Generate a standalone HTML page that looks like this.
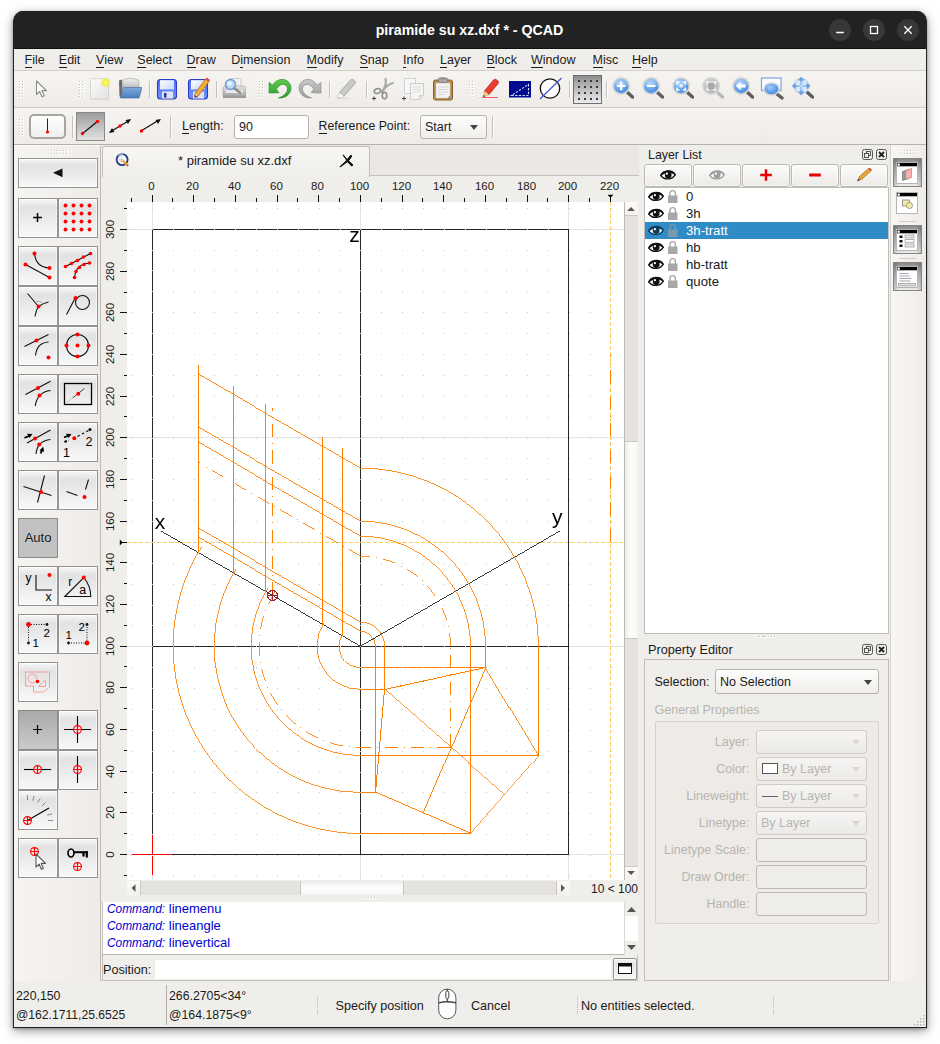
<!DOCTYPE html>
<html lang="en"><head><meta charset="utf-8"><title>piramide su xz.dxf * - QCAD</title>
<style>
*{box-sizing:border-box}
html,body{margin:0;padding:0}
body{width:940px;height:1044px;background:#fff;overflow:hidden;position:relative;font-family:"Liberation Sans",sans-serif;font-size:12.5px;color:#1a1a1a}
.a{position:absolute}
.t{position:absolute;white-space:pre;line-height:16px;height:16px}
#win{left:13px;top:11px;width:914px;height:1017px;background:linear-gradient(#222 0,#222 30px,#f0eeea 30px);border-radius:10px 10px 0 0;border:1px solid #222;border-top:0;box-shadow:0 3px 11px 0 rgba(0,0,0,.40),0 1px 3px rgba(0,0,0,.28);overflow:hidden}
#title{left:0;top:0;width:912px;height:38px;background:#222222;border-bottom:1px solid #101010}
#title .tt{left:-1px;width:913px;top:10px;text-align:center;color:#fff;font-weight:bold;font-size:14.2px;line-height:18px;height:18px}
.wb{position:absolute;top:8px;width:22px;height:22px;border-radius:11px;background:#383838}
#menubar{left:0;top:38px;width:912px;height:22px;background:#f0eeea;border-bottom:1px solid #d2cfca}
.mi u{text-decoration:none;border-bottom:1px solid #1a1a1a;padding-bottom:0px}
.tb{left:0;width:912px;background:linear-gradient(#f6f4f1,#efece8);border-bottom:1px solid #cfccc7}
.grip{position:absolute;background-image:linear-gradient(#bdbab5,#bdbab5),linear-gradient(#fff,#fff);background-size:1px 1px,1px 1px;background-position:0 0,1px 1px;background-repeat:no-repeat}
.gd{position:absolute;width:2px;height:2px;background:linear-gradient(135deg,#bebbb6 50%,#fff 50%)}
.vsep{position:absolute;width:2px;background:linear-gradient(90deg,#c3c0bb 50%,#fdfdfc 50%)}
.btn{position:absolute;border:1px solid #949494;background:linear-gradient(#f8f8f8 0%,#e2e2e2 22%,#ebebeb 55%,#f8f8f8 100%);box-shadow:inset 0 0 0 1px rgba(255,255,255,.55)}
.btn.on{background:#bdbdbd;border-color:#8a8a8a;box-shadow:none}
.btn svg{position:absolute;left:0;top:0}
.dis{color:#b7b4b0}
.combo{position:absolute;border:1px solid #b6b3ae;border-radius:3px;background:linear-gradient(#fdfdfd,#f0eeeb)}
.field{position:absolute;border:1px solid #c9c6c1;border-radius:3px;background:#f1efeb}
svg{display:block}
svg .o{stroke:#ff8000;stroke-width:1;fill:none}
svg .od{stroke:#ff8000;stroke-width:1;fill:none;stroke-dasharray:13.2 6.1 1 6.1}
svg .k{stroke:#262626;stroke-width:1;fill:none}
svg .mg{stroke:#e4e4e4;stroke-width:1}
svg .cur{stroke:#ffcf5e;stroke-width:1;stroke-dasharray:4 2}
svg .lbl{font-family:"Liberation Sans",sans-serif;font-size:21px;fill:#000}
</style></head>
<body>
<div id="win" class="a">
<svg width="0" height="0" style="position:absolute"><defs>
<radialGradient id="gy"><stop offset="0" stop-color="#ffffb0"/><stop offset=".45" stop-color="#f6ee30"/><stop offset="1" stop-color="#f0e840" stop-opacity="0"/></radialGradient>
<linearGradient id="gsheet" x1="0" y1="0" x2="1" y2="1"><stop offset="0" stop-color="#fbfbfb"/><stop offset="1" stop-color="#e2e2e2"/></linearGradient>
<linearGradient id="gfold" x1="0" y1="0" x2="0" y2="1"><stop offset="0" stop-color="#7fa9dc"/><stop offset="1" stop-color="#4d7dbd"/></linearGradient>
<linearGradient id="gpap" x1="0" y1="0" x2="0" y2="1"><stop offset="0" stop-color="#f2f2f2"/><stop offset="1" stop-color="#b5b5b5"/></linearGradient>
<linearGradient id="gsave" x1="0" y1="0" x2="0" y2="1"><stop offset="0" stop-color="#5070f0"/><stop offset="1" stop-color="#6f92ff"/></linearGradient>
<linearGradient id="glab" x1="0" y1="0" x2="1" y2="1"><stop offset="0" stop-color="#ffffff"/><stop offset="1" stop-color="#c4d6ff"/></linearGradient>
<linearGradient id="ggray" x1="0" y1="0" x2="0" y2="1"><stop offset="0" stop-color="#e6e6e6"/><stop offset="1" stop-color="#a9a9a9"/></linearGradient>
<radialGradient id="glens" cx=".4" cy=".35" r=".7"><stop offset="0" stop-color="#a6ccf8"/><stop offset=".7" stop-color="#5b9bea"/><stop offset="1" stop-color="#4a8ae0"/></radialGradient>
<radialGradient id="glensd" cx=".4" cy=".35" r=".7"><stop offset="0" stop-color="#dcdcdc"/><stop offset="1" stop-color="#b0b0b0"/></radialGradient>
<linearGradient id="gundo" x1="0" y1="0" x2="0" y2="1"><stop offset="0" stop-color="#5ccc4c"/><stop offset="1" stop-color="#2f9a2f"/></linearGradient>
<linearGradient id="gredo" x1="0" y1="0" x2="0" y2="1"><stop offset="0" stop-color="#c9c9c9"/><stop offset="1" stop-color="#9c9c9c"/></linearGradient>
</defs></svg>
<div id="title" class="a"><div class="t tt">piramide su xz.dxf * - QCAD</div>
<div class="wb" style="left:815px"><svg width="22" height="22" viewBox="0 0 22 22"><path d="M7.200 13.500h7.600" stroke="#fff" stroke-width="1.300"/></svg></div>
<div class="wb" style="left:849px"><svg width="22" height="22" viewBox="0 0 22 22"><rect x="7.500" y="7.500" width="7" height="7" fill="none" stroke="#fff" stroke-width="1.300"/></svg></div>
<div class="wb" style="left:883px"><svg width="22" height="22" viewBox="0 0 22 22"><path d="M7.300 7.300l7.400 7.400M14.700 7.300l-7.400 7.400" stroke="#fff" stroke-width="1.300"/></svg></div>
</div>
<div id="menubar" class="a">
<div class="t mi" style="left:10.5px;top:3px;width:18.4px"><u>F</u>ile</div>
<div class="t mi" style="left:44.8px;top:3px;width:21px"><u>E</u>dit</div>
<div class="t mi" style="left:82.1px;top:3px;width:26px"><u>V</u>iew</div>
<div class="t mi" style="left:123.30000000000001px;top:3px;width:33.6px"><u>S</u>elect</div>
<div class="t mi" style="left:172.5px;top:3px;width:29.7px"><u>D</u>raw</div>
<div class="t mi" style="left:217.3px;top:3px;width:60.1px">D<u>i</u>mension</div>
<div class="t mi" style="left:292.6px;top:3px;width:37.9px"><u>M</u>odify</div>
<div class="t mi" style="left:345.5px;top:3px;width:28.5px"><u>S</u>nap</div>
<div class="t mi" style="left:389px;top:3px;width:22.5px"><u>I</u>nfo</div>
<div class="t mi" style="left:426px;top:3px;width:31px"><u>L</u>ayer</div>
<div class="t mi" style="left:472.5px;top:3px;width:30px"><u>B</u>lock</div>
<div class="t mi" style="left:517px;top:3px;width:46px"><u>W</u>indow</div>
<div class="t mi" style="left:578.5px;top:3px;width:26px"><u>M</u>isc</div>
<div class="t mi" style="left:618px;top:3px;width:26.5px"><u>H</u>elp</div>
</div>
<div class="a tb" style="top:60px;height:37px">
<div class="gd" style="left:5px;top:10px"></div><div class="gd" style="left:5px;top:13px"></div><div class="gd" style="left:5px;top:16px"></div><div class="gd" style="left:5px;top:19px"></div><div class="gd" style="left:5px;top:22px"></div><div class="gd" style="left:5px;top:25px"></div><div class="gd" style="left:8px;top:10px"></div><div class="gd" style="left:8px;top:13px"></div><div class="gd" style="left:8px;top:16px"></div><div class="gd" style="left:8px;top:19px"></div><div class="gd" style="left:8px;top:22px"></div><div class="gd" style="left:8px;top:25px"></div>
<div class="gd" style="left:65px;top:10px"></div><div class="gd" style="left:65px;top:13px"></div><div class="gd" style="left:65px;top:16px"></div><div class="gd" style="left:65px;top:19px"></div><div class="gd" style="left:65px;top:22px"></div><div class="gd" style="left:65px;top:25px"></div><div class="gd" style="left:68px;top:10px"></div><div class="gd" style="left:68px;top:13px"></div><div class="gd" style="left:68px;top:16px"></div><div class="gd" style="left:68px;top:19px"></div><div class="gd" style="left:68px;top:22px"></div><div class="gd" style="left:68px;top:25px"></div>
<div class="gd" style="left:245px;top:10px"></div><div class="gd" style="left:245px;top:13px"></div><div class="gd" style="left:245px;top:16px"></div><div class="gd" style="left:245px;top:19px"></div><div class="gd" style="left:245px;top:22px"></div><div class="gd" style="left:245px;top:25px"></div><div class="gd" style="left:248px;top:10px"></div><div class="gd" style="left:248px;top:13px"></div><div class="gd" style="left:248px;top:16px"></div><div class="gd" style="left:248px;top:19px"></div><div class="gd" style="left:248px;top:22px"></div><div class="gd" style="left:248px;top:25px"></div>
<div class="gd" style="left:455px;top:10px"></div><div class="gd" style="left:455px;top:13px"></div><div class="gd" style="left:455px;top:16px"></div><div class="gd" style="left:455px;top:19px"></div><div class="gd" style="left:455px;top:22px"></div><div class="gd" style="left:455px;top:25px"></div><div class="gd" style="left:458px;top:10px"></div><div class="gd" style="left:458px;top:13px"></div><div class="gd" style="left:458px;top:16px"></div><div class="gd" style="left:458px;top:19px"></div><div class="gd" style="left:458px;top:22px"></div><div class="gd" style="left:458px;top:25px"></div>
<div class="vsep" style="left:135px;top:10px;height:17px"></div>
<div class="vsep" style="left:202px;top:10px;height:17px"></div>
<div class="vsep" style="left:315px;top:10px;height:17px"></div>
<div class="vsep" style="left:352px;top:10px;height:17px"></div>
<div class="vsep" style="left:555px;top:10px;height:17px"></div>
<div class="vsep" style="left:592px;top:10px;height:17px"></div>
<svg class="a" style="left:15.0px;top:6.0px" width="24" height="24" viewBox="0 0 24 24"><path d="M7.500 4v13.500l3.200-3 2.300 5.300 2.200-1-2.300-5.200h4.500z" fill="#fff" stroke="#8a8a8a" stroke-width="1.100" stroke-linejoin="round"/></svg>
<svg class="a" style="left:74.0px;top:6.0px" width="24" height="24" viewBox="0 0 24 24"><rect x="2.500" y="2" width="18.500" height="21" rx="1" fill="#d5d5d5" opacity=".6"/><rect x="2.500" y="1.700" width="18" height="20.300" rx="1" fill="url(#gsheet)" stroke="#cfcfcf" stroke-width=".8"/><circle cx="17.600" cy="5.500" r="5.500" fill="url(#gy)"/></svg>
<svg class="a" style="left:104.0px;top:6.0px" width="24" height="24" viewBox="0 0 24 24"><path d="M1 3.500l3-1v18l-2.500-1z" fill="#6a6a6a"/><path d="M5 3c3-2 10-2 14-.5l2 1.500v8H4z" fill="url(#gpap)" stroke="#a0a0a0" stroke-width=".6"/><path d="M5.500 10.500h18.500l-3 10.500H2.500z" fill="url(#gfold)" stroke="#4672ad" stroke-width=".7"/></svg>
<svg class="a" style="left:141.0px;top:6.0px" width="24" height="24" viewBox="0 0 24 24"><rect x="2.500" y="2.500" width="19" height="19.500" rx="3" fill="url(#gsave)" stroke="#2c3cc4" stroke-width="1.100"/><rect x="5" y="3.200" width="14" height="9.300" fill="url(#glab)"/><rect x="7" y="14.500" width="11" height="7" fill="#dfe3ef"/><rect x="9" y="16" width="2.500" height="4.500" fill="#2336b0"/></svg>
<svg class="a" style="left:172.0px;top:6.0px" width="24" height="24" viewBox="0 0 24 24"><rect x="2.500" y="2.500" width="19" height="19.500" rx="3" fill="url(#gsave)" stroke="#2c3cc4" stroke-width="1.100"/><rect x="5" y="3.200" width="14" height="9.300" fill="url(#glab)"/><rect x="7" y="14.500" width="11" height="7" fill="#dfe3ef"/><rect x="9" y="16" width="2.500" height="4.500" fill="#2336b0"/><path d="M9.500 15.500l10-13.500 3.500 2.600-10 13.500-4.600 1.900z" fill="#f2a93a" stroke="#a86814" stroke-width=".7"/><path d="M19.500 2l3.500 2.600 1-1.500-3.400-2.500z" fill="#e4453a"/><path d="M9.500 15.500l-1.100 4.500 4.600-1.900z" fill="#f0d8b0" stroke="#a86814" stroke-width=".5"/><path d="M8.400 20l.5-2 1.500 1.200z" fill="#333"/></svg>
<svg class="a" style="left:208.0px;top:6.0px" width="24" height="24" viewBox="0 0 24 24"><path d="M8 1.500h11v9H8z" fill="#f1f1f1" stroke="#c4c4c4" stroke-width=".8"/><path d="M1 12c0-2 1-3 3-3h17c2 0 3 1 3 3v6.500H1z" fill="url(#ggray)" stroke="#9a9a9a" stroke-width=".6"/><path d="M1 18.500h23v2.500H1z" fill="#9b9b9b"/><rect x="4" y="13" width="17" height="3" rx="1" fill="#f4f4f4" opacity=".8"/><circle cx="8.500" cy="7.500" r="5" fill="#bcd6f4" stroke="#6f9fd8" stroke-width="1.600"/><circle cx="7.500" cy="6.500" r="2.400" fill="#e6f0fc"/><path d="M12.500 11.500l5.500 4" stroke="#8a8a8a" stroke-width="2.600" stroke-linecap="round"/></svg>
<svg class="a" style="left:254.0px;top:6.0px" width="24" height="24" viewBox="0 0 24 24"><path d="M1.100 5.500V16l9.900-.3-2.700-3.300C10 8.500 14 6.500 17 7.800c3.300 1.700 3.300 6 .3 9-2 2-4.300 3.500-6.700 4.100 4.400.6 9.400-1.400 11.700-6.400C24.500 9 21 3.500 15.500 2.500 11 1.800 7 4.500 4.600 8.200z" fill="url(#gundo)" stroke="#2a8a2a" stroke-width=".7" stroke-linejoin="round"/></svg>
<svg class="a" style="left:284.0px;top:6.0px" width="24" height="24" viewBox="0 0 24 24"><g transform="translate(24 0) scale(-1 1)"><path d="M1.100 5.500V16l9.900-.3-2.700-3.300C10 8.500 14 6.500 17 7.800c3.300 1.700 3.300 6 .3 9-2 2-4.300 3.500-6.700 4.100 4.400.6 9.400-1.400 11.700-6.400C24.500 9 21 3.500 15.500 2.500 11 1.800 7 4.500 4.600 8.200z" fill="url(#gredo)" stroke="#8c8c8c" stroke-width=".7" stroke-linejoin="round"/></g></svg>
<svg class="a" style="left:321.0px;top:6.0px" width="24" height="24" viewBox="0 0 24 24"><path d="M4.500 15.500l11-12.500c.8-.9 2-1 2.900-.2l1.300 1.100c.9.800 1 2 .2 2.900l-11 12.500z" fill="#c9c9c9" stroke="#9d9d9d" stroke-width=".8"/><path d="M4.500 15.500l4.400 3.800-1.400 1.500-5-.3z" fill="#fafafa" stroke="#bdbdbd" stroke-width=".7"/><path d="M2 21.500h13" stroke="#d9d9d9" stroke-width="1"/></svg>
<svg class="a" style="left:357.0px;top:6.0px" width="24" height="24" viewBox="0 0 24 24"><path d="M14.500 2c1 4 0 8-3 12M22 6c-4 1-8 4-11 9" stroke="#a8a8a8" stroke-width="2.200" fill="none" stroke-linecap="round"/><ellipse cx="13.500" cy="18.500" rx="2.300" ry="3.300" fill="none" stroke="#8e8e8e" stroke-width="1.600"/><ellipse cx="6.500" cy="14" rx="3.300" ry="2.300" fill="none" stroke="#8e8e8e" stroke-width="1.600" transform="rotate(-20 6.500 14)"/><path d="M1 21.500h4M3 19.500v4" stroke="#444" stroke-width="1"/></svg>
<svg class="a" style="left:387.0px;top:6.0px" width="24" height="24" viewBox="0 0 24 24"><path d="M3.500 1.500h11v15h-11z" fill="#f7f7f7" stroke="#cdcdcd" stroke-width=".9"/><path d="M9.500 6.500h13v12l-4 4h-9z" fill="#f4f4f4" stroke="#c6c6c6" stroke-width=".9"/><path d="M18.500 22.500v-4h4" fill="#e2e2e2" stroke="#c6c6c6" stroke-width=".7"/><path d="M12 10h8M12 12.500h8M12 15h8" stroke="#dcdcdc" stroke-width="1"/><path d="M1 21.500h4M3 19.500v4" stroke="#444" stroke-width="1"/></svg>
<svg class="a" style="left:417.0px;top:6.0px" width="24" height="24" viewBox="0 0 24 24"><rect x="2.500" y="3" width="19" height="20" rx="2" fill="#b98a4a" stroke="#8a6020" stroke-width="1"/><path d="M5 6h14v15l-2 0H5z" fill="#f3f3f3" stroke="#cfcfcf" stroke-width=".6"/><path d="M7 10h10M7 12.500h10M7 15h10M7 17.500h7" stroke="#d6d6d6" stroke-width="1"/><path d="M16 21.500l3.500-3.500v3.500z" fill="#8f8f8f"/><rect x="7.500" y="1" width="9" height="4.500" rx="1.200" fill="#a9a9a9" stroke="#7a7a7a" stroke-width=".8"/><rect x="9.500" y=".5" width="5" height="2" rx="1" fill="#8a8a8a"/></svg>
<svg class="a" style="left:464.0px;top:6.0px" width="24" height="24" viewBox="0 0 24 24"><path d="M6.500 14l9-11c.7-.9 1.900-1 2.800-.3l1.400 1.100c.9.700 1 1.900.3 2.800l-9 11z" fill="#ee3b30" stroke="#b8201a" stroke-width=".8"/><path d="M6.500 14l4.500 3.600-5.700 2.400z" fill="#f3cf9c" stroke="#b98a4a" stroke-width=".5"/><path d="M5.300 20l.5-2 1.500 1.200z" fill="#333"/><path d="M4 20.500h16" stroke="#f06060" stroke-width="1.200"/></svg>
<svg class="a" style="left:494.0px;top:6.0px" width="24" height="24" viewBox="0 0 24 24"><rect x="1" y="4" width="22" height="16.500" fill="#000a8c"/><path d="M3.500 18.500h17V7.500z" fill="none" stroke="#e0e8ff" stroke-width="1.100" stroke-dasharray="2.200 1.500"/></svg>
<svg class="a" style="left:524.0px;top:6.0px" width="24" height="24" viewBox="0 0 24 24"><circle cx="12" cy="11.500" r="9.700" fill="#fff" stroke="#111" stroke-width="1.300"/><path d="M2 22L23.500 1" stroke="#3a4fe0" stroke-width="1.100"/></svg>
<div class="btn on" style="left:559px;top:4px;width:29px;height:29px;background:linear-gradient(#8d8d8d,#a9a9a9 25%,#ebebeb);border-color:#6e6e6e"><svg width="27" height="27" viewBox="0 0 27 27"><g fill="#3a3a3a"><rect x="4" y="4" width="2" height="2"/><rect x="4" y="10" width="2" height="2"/><rect x="4" y="16" width="2" height="2"/><rect x="4" y="22" width="2" height="2"/><rect x="10" y="4" width="2" height="2"/><rect x="10" y="10" width="2" height="2"/><rect x="10" y="16" width="2" height="2"/><rect x="10" y="22" width="2" height="2"/><rect x="16" y="4" width="2" height="2"/><rect x="16" y="10" width="2" height="2"/><rect x="16" y="16" width="2" height="2"/><rect x="16" y="22" width="2" height="2"/><rect x="22" y="4" width="2" height="2"/><rect x="22" y="10" width="2" height="2"/><rect x="22" y="16" width="2" height="2"/><rect x="22" y="22" width="2" height="2"/></g></svg></div>
<svg class="a" style="left:596.0px;top:6.0px" width="24" height="24" viewBox="0 0 24 24"><path d="M17.500 15.500l5 4.500" stroke="#5e5e5e" stroke-width="3.400" stroke-linecap="round"/><circle cx="11.200" cy="9" r="8.900" fill="#d3d6d3"/><circle cx="11.200" cy="9" r="7.200" fill="url(#glens)"/><path d="M4.500 8.500a6.700 6.700 0 0 1 13.400 0c-4 1.500-9.400 1.500-13.400 0z" fill="#fff" opacity=".22"/><path d="M7 9h8.400M11.200 4.800v8.400" stroke="#fff" stroke-width="2.200" fill="none"/></svg>
<svg class="a" style="left:626.0px;top:6.0px" width="24" height="24" viewBox="0 0 24 24"><path d="M17.500 15.500l5 4.500" stroke="#5e5e5e" stroke-width="3.400" stroke-linecap="round"/><circle cx="11.200" cy="9" r="8.900" fill="#d3d6d3"/><circle cx="11.200" cy="9" r="7.200" fill="url(#glens)"/><path d="M4.500 8.500a6.700 6.700 0 0 1 13.400 0c-4 1.500-9.400 1.500-13.400 0z" fill="#fff" opacity=".22"/><path d="M7 9h8.400" stroke="#fff" stroke-width="2.200" fill="none"/></svg>
<svg class="a" style="left:656.0px;top:6.0px" width="24" height="24" viewBox="0 0 24 24"><path d="M17.500 15.500l5 4.500" stroke="#5e5e5e" stroke-width="3.400" stroke-linecap="round"/><circle cx="11.200" cy="9" r="8.900" fill="#d3d6d3"/><circle cx="11.200" cy="9" r="7.200" fill="url(#glens)"/><path d="M4.500 8.500a6.700 6.700 0 0 1 13.400 0c-4 1.500-9.400 1.500-13.400 0z" fill="#fff" opacity=".22"/><path d="M7 7.500V5h2.500M12.900 5h2.500v2.500M15.400 10.500V13h-2.500M9.500 13H7v-2.500" stroke="#fff" stroke-width="1.600" fill="none"/><rect x="9.700" y="7.500" width="3" height="3" fill="#fff" opacity=".8"/></svg>
<svg class="a" style="left:686.0px;top:6.0px" width="24" height="24" viewBox="0 0 24 24"><path d="M17.500 15.500l5 4.500" stroke="#b9b9b9" stroke-width="3.400" stroke-linecap="round"/><circle cx="11.200" cy="9" r="8.900" fill="#d4d4d2"/><circle cx="11.200" cy="9" r="7.200" fill="url(#glensd)"/><path d="M7 7.500V5h2.500M12.900 5h2.500v2.500M15.400 10.500V13h-2.500M9.500 13H7v-2.500" stroke="#f2f2f2" stroke-width="1.600" fill="none"/><rect x="8.200" y="6" width="6" height="6" fill="#a9a9a9"/></svg>
<svg class="a" style="left:716.0px;top:6.0px" width="24" height="24" viewBox="0 0 24 24"><path d="M17.500 15.500l5 4.500" stroke="#5e5e5e" stroke-width="3.400" stroke-linecap="round"/><circle cx="11.200" cy="9" r="8.900" fill="#d3d6d3"/><circle cx="11.200" cy="9" r="7.200" fill="url(#glens)"/><path d="M4.500 8.500a6.700 6.700 0 0 1 13.400 0c-4 1.500-9.400 1.500-13.400 0z" fill="#fff" opacity=".22"/><path d="M5.800 9l5-4.200v2.600h4.800v3.200h-4.800v2.600z" fill="#fff"/></svg>
<svg class="a" style="left:746.0px;top:6.0px" width="24" height="24" viewBox="0 0 24 24"><rect x="1.500" y="1" width="19.500" height="12.500" fill="#fbfcfe" stroke="#7ea5e0" stroke-width="1.200"/><path d="M17 17l5 4" stroke="#5e5e5e" stroke-width="3.400" stroke-linecap="round"/><ellipse cx="11.500" cy="12" rx="8.300" ry="6.800" fill="#d3d6d3"/><ellipse cx="11.500" cy="12" rx="6.800" ry="5.300" fill="url(#glens)"/></svg>
<svg class="a" style="left:776.0px;top:6.0px" width="24" height="24" viewBox="0 0 24 24"><path d="M17.500 15.500l5 4.500" stroke="#5e5e5e" stroke-width="3.400" stroke-linecap="round"/><circle cx="11.200" cy="9" r="7.600" fill="#d9e6f6" stroke="#c3d3e8" stroke-width="1.200"/><path d="M11.200 -.5l3.300 4h-6.600zM11.200 18.500l3.300-4h-6.600zM1.700 9l4-3.300v6.600zM20.700 9l-4-3.300v6.600z" fill="#6aa0e6"/><path d="M11.200 3v12M5.200 9h12" stroke="#6aa0e6" stroke-width="2.200"/><path d="M11.200 4.500v9M6.700 9h9" stroke="#fff" stroke-width=".8"/></svg>
</div>
<div class="a tb" style="top:97px;height:37px;border-bottom:1px solid #b4b1ac">
<div class="gd" style="left:5px;top:11px"></div><div class="gd" style="left:5px;top:14px"></div><div class="gd" style="left:5px;top:17px"></div><div class="gd" style="left:5px;top:20px"></div><div class="gd" style="left:5px;top:23px"></div><div class="gd" style="left:5px;top:26px"></div><div class="gd" style="left:8px;top:11px"></div><div class="gd" style="left:8px;top:14px"></div><div class="gd" style="left:8px;top:17px"></div><div class="gd" style="left:8px;top:20px"></div><div class="gd" style="left:8px;top:23px"></div><div class="gd" style="left:8px;top:26px"></div>
<div class="a" style="left:15px;top:6px;width:37px;height:25px;border:2px solid #a7a5a2;border-radius:5px;background:linear-gradient(#fff,#f0efed)"><svg width="33" height="21" viewBox="0 0 33 21"><path d="M16.5 2.500v13" stroke="#222" stroke-width="1"/><circle cx="16.5" cy="16" r="1.6" fill="#f00"/></svg></div>
<div class="vsep" style="left:58px;top:8px;height:22px"></div>
<div class="btn on" style="left:62px;top:4px;width:29px;height:29px;background:linear-gradient(#9d9d9d,#e3e3e3);border-color:#8a8a8a"><svg width="27" height="27" viewBox="0 0 27 27"><path d="M5 21L21 8" stroke="#111" stroke-width="1.2"/><circle cx="5.500" cy="20.5" r="1.700" fill="#f00"/><circle cx="20.5" cy="8.500" r="1.700" fill="#f00"/></svg></div>
<svg class="a" style="left:93px;top:5px" width="27" height="27" viewBox="0 0 27 27"><path d="M3 19L23 7" stroke="#111" stroke-width="1.2"/><path d="M2 20l5.500-1-2.500-4zM24 6l-5.500 1 2.500 4z" fill="#111"/><circle cx="13" cy="13" r="1.700" fill="#f00"/></svg>
<svg class="a" style="left:123px;top:5px" width="27" height="27" viewBox="0 0 27 27"><path d="M4 18L22 7" stroke="#111" stroke-width="1.200"/><path d="M24 6l-5.500 1 2.500 4z" fill="#111"/><circle cx="4.500" cy="18" r="1.700" fill="#f00"/></svg>
<div class="vsep" style="left:156px;top:8px;height:22px"></div>
<div class="t mi" style="left:168px;top:10px;font-size:12.5px"><u>L</u>ength:</div>
<div class="a" style="left:220px;top:7px;width:75px;height:24px;border:1px solid #b3b0ab;border-radius:3px;background:#fff"><div class="t" style="left:4px;top:3px">90</div></div>
<div class="t mi" style="left:304.5px;top:10px;font-size:12.3px"><u>R</u>eference Point:</div>
<div class="combo" style="left:406px;top:7px;width:67px;height:24px"><div class="t" style="left:4px;top:3px">Start</div><svg class="a" style="left:49px;top:9px" width="9" height="6"><path d="M0 0h8l-4 5z" fill="#444"/></svg></div>
<div class="vsep" style="left:478px;top:8px;height:22px"></div>
</div>
<div class="a" style="left:0;top:134px;width:87px;height:836px;border-right:1px solid #bfbcb7;border-top:1px solid #fbfaf9;background:linear-gradient(90deg,#f6f4f1,#efece8)">
<div class="gd" style="left:37px;top:4px"></div><div class="gd" style="left:37px;top:7px"></div><div class="gd" style="left:40px;top:4px"></div><div class="gd" style="left:40px;top:7px"></div><div class="gd" style="left:43px;top:4px"></div><div class="gd" style="left:43px;top:7px"></div><div class="gd" style="left:46px;top:4px"></div><div class="gd" style="left:46px;top:7px"></div><div class="gd" style="left:49px;top:4px"></div><div class="gd" style="left:49px;top:7px"></div><div class="gd" style="left:52px;top:4px"></div><div class="gd" style="left:52px;top:7px"></div>
<div class="btn" style="left:4px;top:12px;width:80px;height:30px"><svg width="78" height="28" viewBox="0 0 78 28"><path d="M43.500 9.500v8.700l-9.500-4.350z" fill="#111"/></svg></div>
<div class="btn" style="left:4px;top:52px;width:40px;height:40px"><svg width="38" height="38" viewBox="0.5 0.5 38 38"><path d="M14.600 19h8.800M19 14.600v8.800" stroke="#000" stroke-width="1.500"/></svg></div>
<div class="btn" style="left:44px;top:52px;width:40px;height:40px"><svg width="38" height="38" viewBox="0.5 0.5 38 38"><circle cx="7" cy="7" r="1.9" fill="#f00"/><circle cx="7" cy="15" r="1.9" fill="#f00"/><circle cx="7" cy="23" r="1.9" fill="#f00"/><circle cx="7" cy="31" r="1.9" fill="#f00"/><circle cx="15" cy="7" r="1.9" fill="#f00"/><circle cx="15" cy="15" r="1.9" fill="#f00"/><circle cx="15" cy="23" r="1.9" fill="#f00"/><circle cx="15" cy="31" r="1.9" fill="#f00"/><circle cx="23" cy="7" r="1.9" fill="#f00"/><circle cx="23" cy="15" r="1.9" fill="#f00"/><circle cx="23" cy="23" r="1.9" fill="#f00"/><circle cx="23" cy="31" r="1.9" fill="#f00"/><circle cx="31" cy="7" r="1.9" fill="#f00"/><circle cx="31" cy="15" r="1.9" fill="#f00"/><circle cx="31" cy="23" r="1.9" fill="#f00"/><circle cx="31" cy="31" r="1.9" fill="#f00"/></svg></div>
<div class="btn" style="left:4px;top:100px;width:40px;height:40px"><svg width="38" height="38" viewBox="0.5 0.5 38 38"><path d="M7 18l24 13M16 7c1 10 6 14 15 14.500" stroke="#111" stroke-width="1.100" fill="none"/><circle cx="7" cy="18" r="2" fill="#f00"/><circle cx="31" cy="31" r="2" fill="#f00"/><circle cx="16" cy="7" r="2" fill="#f00"/><circle cx="31" cy="21.5" r="2" fill="#f00"/></svg></div>
<div class="btn" style="left:44px;top:100px;width:40px;height:40px"><svg width="38" height="38" viewBox="0.5 0.5 38 38"><path d="M7 20l25-13M16 31c1-9 6-14 15-14.500" stroke="#111" stroke-width="1.100" fill="none"/><circle cx="7" cy="20" r="1.8" fill="#f00"/><circle cx="13" cy="17" r="1.8" fill="#f00"/><circle cx="19" cy="14" r="1.8" fill="#f00"/><circle cx="25" cy="10.5" r="1.8" fill="#f00"/><circle cx="32" cy="7" r="1.8" fill="#f00"/><circle cx="16" cy="31" r="1.8" fill="#f00"/><circle cx="17.5" cy="25" r="1.8" fill="#f00"/><circle cx="21" cy="21" r="1.8" fill="#f00"/><circle cx="25.5" cy="18" r="1.8" fill="#f00"/><circle cx="31" cy="16.5" r="1.8" fill="#f00"/></svg></div>
<div class="btn" style="left:4px;top:140px;width:40px;height:40px"><svg width="38" height="38" viewBox="0.5 0.5 38 38"><path d="M9 7l11 13M20 20c4-3 6-3.500 10-4.500M20 20c-2 3-3 6-3.500 10" stroke="#111" stroke-width="1.100" fill="none"/><path d="M17 16a4.500 4.500 0 0 1 7 1" stroke="#999" fill="none" stroke-width=".8"/><circle cx="20" cy="20" r="2" fill="#f00"/></svg></div>
<div class="btn" style="left:44px;top:140px;width:40px;height:40px"><svg width="38" height="38" viewBox="0.5 0.5 38 38"><circle cx="24" cy="16" r="7" stroke="#111" stroke-width="1.100" fill="none"/><path d="M17 11l-9 17" stroke="#111" stroke-width="1.100" fill="none"/><circle cx="17" cy="11.5" r="2" fill="#f00"/></svg></div>
<div class="btn" style="left:4px;top:180px;width:40px;height:40px"><svg width="38" height="38" viewBox="0.5 0.5 38 38"><path d="M6 20l24-12M17 29c1-9 5-13 13-13.500" stroke="#111" stroke-width="1.100" fill="none"/><circle cx="18" cy="14" r="2" fill="#f00"/><circle cx="30" cy="31" r="2" fill="#f00"/></svg></div>
<div class="btn" style="left:44px;top:180px;width:40px;height:40px"><svg width="38" height="38" viewBox="0.5 0.5 38 38"><circle cx="19" cy="19" r="11" stroke="#111" stroke-width="1.100" fill="none"/><circle cx="19" cy="19" r="2" fill="#f00"/><circle cx="8" cy="19" r="2" fill="#f00"/><circle cx="30" cy="19" r="2" fill="#f00"/><circle cx="19" cy="8" r="2" fill="#f00"/><circle cx="19" cy="30" r="2" fill="#f00"/></svg></div>
<div class="btn" style="left:4px;top:228px;width:40px;height:40px"><svg width="38" height="38" viewBox="0.5 0.5 38 38"><path d="M7 20L32 6.700M16.700 31.500c1.500-9.500 6-14.500 15.300-15.500" stroke="#111" stroke-width="1.100" fill="none"/><circle cx="19.5" cy="13.4" r="2" fill="#f00"/><circle cx="21" cy="20.9" r="2" fill="#f00"/></svg></div>
<div class="btn" style="left:44px;top:228px;width:40px;height:40px"><svg width="38" height="38" viewBox="0.5 0.5 38 38"><rect x="6" y="9" width="27" height="21" stroke="#000" stroke-width="1.300" fill="none"/><path d="M8 28l5-4M29 11l3-2.500" stroke="#aaa" stroke-width=".8"/><path d="M14 23.500l12-9.500" stroke="#333" stroke-width=".9"/><circle cx="19.8" cy="19.2" r="2" fill="#f00"/></svg></div>
<div class="btn" style="left:4px;top:276px;width:40px;height:40px"><svg width="38" height="38" viewBox="0.5 0.5 38 38"><path d="M8.500 20.500L32 7.500M17.500 31.500c.8-9 5-13.500 14.500-14.500" stroke="#111" stroke-width="1.100" fill="none"/><path d="M6 15.300l4.500-1.800" stroke="#000" stroke-width="1.800"/><path d="M14 11.500l-5.500-.3 2.500 4.300z" fill="#000"/><path d="M22.300 31l1-3.500" stroke="#000" stroke-width="1.800"/><path d="M24.700 24.300l-3.700 3.700 4.600 1.300z" fill="#000"/><circle cx="16.5" cy="16" r="2" fill="#f00"/><circle cx="20.7" cy="22" r="2" fill="#f00"/></svg></div>
<div class="btn" style="left:44px;top:276px;width:40px;height:40px"><svg width="38" height="38" viewBox="0.5 0.5 38 38"><path d="M6 19.500l4-1.700" stroke="#000" stroke-width="2" stroke-dasharray="2.500 1.500"/><path d="M5.500 15l4.500-2" stroke="#000" stroke-width="1.800"/><path d="M13 11.500l-5.500-.300 2.500 4.300z" fill="#000"/><path d="M19 14l11-6" stroke="#000" stroke-width="1.100" stroke-dasharray="2.500 2.500"/><circle cx="31.500" cy="7" r="1.500" fill="#000"/><text x="27" y="23" font-size="12.500" font-family="Liberation Sans,sans-serif">2</text><text x="4.500" y="34" font-size="12.500" font-family="Liberation Sans,sans-serif">1</text><circle cx="15.8" cy="15.8" r="2" fill="#f00"/></svg></div>
<div class="btn" style="left:4px;top:324px;width:40px;height:40px"><svg width="38" height="38" viewBox="0.5 0.5 38 38"><path d="M5 16l28 9M26 5l-7 27" stroke="#111" stroke-width="1.100" fill="none"/><circle cx="22.5" cy="21.5" r="2" fill="#f00"/></svg></div>
<div class="btn" style="left:44px;top:324px;width:40px;height:40px"><svg width="38" height="38" viewBox="0.5 0.5 38 38"><path d="M8 21l11 4M27 19l3-10" stroke="#111" stroke-width="1.100" fill="none"/><circle cx="26" cy="26.5" r="2" fill="#f00"/></svg></div>
<div class="btn on" style="left:4px;top:372px;width:40px;height:40px;background:#c2c2c2"><div class="t" style="left:0;width:38px;text-align:center;top:11px;font-size:13px">Auto</div></div>
<div class="btn" style="left:4px;top:420px;width:40px;height:40px"><svg width="38" height="38" viewBox="0.5 0.5 38 38"><g transform="translate(1 .5)"><path d="M16.500 8v15h16" stroke="#111" stroke-width="1.100" fill="none"/><text x="6" y="15" font-size="12" font-family="Liberation Sans,sans-serif">y</text><text x="26" y="34" font-size="12" font-family="Liberation Sans,sans-serif">x</text><circle cx="30" cy="8" r="2" fill="#f00"/></g></svg></div>
<div class="btn" style="left:44px;top:420px;width:40px;height:40px"><svg width="38" height="38" viewBox="0.5 0.5 38 38"><g transform="translate(1.300 1)"><path d="M5 29L24 10c4 5 7 12 7 19z" stroke="#111" stroke-width="1.100" fill="none"/><text x="8.500" y="18" font-size="12" font-family="Liberation Sans,sans-serif">r</text><text x="19.500" y="26.500" font-size="12.500" font-family="Liberation Sans,sans-serif">a</text><circle cx="24" cy="10" r="2" fill="#f00"/></g></svg></div>
<div class="btn" style="left:4px;top:468px;width:40px;height:40px"><svg width="38" height="38" viewBox="0.5 0.5 38 38"><path d="M10 10h18M10 10v18" stroke="#111" stroke-width="1" stroke-dasharray="1 1.500"/><circle cx="28.500" cy="10" r="1.400" fill="#111"/><circle cx="10" cy="28.500" r="1.400" fill="#111"/><text x="25" y="22" font-size="11.500" font-family="Liberation Sans,sans-serif">2</text><text x="14" y="32" font-size="11.500" font-family="Liberation Sans,sans-serif">1</text><circle cx="10" cy="10" r="2.4" fill="#f00"/></svg></div>
<div class="btn" style="left:44px;top:468px;width:40px;height:40px"><svg width="38" height="38" viewBox="0.5 0.5 38 38"><path d="M10 28.500h18M28.500 10v18" stroke="#111" stroke-width="1" stroke-dasharray="1 1.500"/><circle cx="28.500" cy="10" r="1.400" fill="#111"/><circle cx="10" cy="28.500" r="1.400" fill="#111"/><text x="20" y="16" font-size="11.500" font-family="Liberation Sans,sans-serif">2</text><text x="7" y="24" font-size="11.500" font-family="Liberation Sans,sans-serif">1</text><circle cx="28.5" cy="28.5" r="2.4" fill="#f00"/></svg></div>
<div class="btn" style="left:4px;top:516px;width:40px;height:40px"><svg width="38" height="38" viewBox="0.5 0.5 38 38"><path d="M7 9.500h24v15l-6 5H15v-6H7z" fill="none" stroke="#f4a0a0" stroke-width="1"/><circle cx="14" cy="16" r="4.500" fill="none" stroke="#f4a0a0"/><path d="M20 24h7v-7z" fill="none" stroke="#f4a0a0"/><circle cx="19" cy="19" r="1.8" fill="#f00"/></svg></div>
<div class="btn on" style="left:4px;top:564px;width:40px;height:40px;background:linear-gradient(#a9a9a9,#cbcbcb);border-color:#8a8a8a"><svg width="38" height="38" viewBox="0.5 0.5 38 38"><path d="M14.600 19h8.800M19 14.600v8.800" stroke="#000" stroke-width="1.200"/></svg></div>
<div class="btn" style="left:44px;top:564px;width:40px;height:40px"><svg width="38" height="38" viewBox="0.5 0.5 38 38"><path d="M5.500 19h27M19 5.500v27" stroke="#000" stroke-width="1.100" fill="none"/><circle cx="19" cy="19" r="3.900" fill="none" stroke="#f00" stroke-width="1.100"/><path d="M15.1 19h7.800M19 15.1v7.800" stroke="#f00" stroke-width="1.100"/></svg></div>
<div class="btn" style="left:4px;top:604px;width:40px;height:40px"><svg width="38" height="38" viewBox="0.5 0.5 38 38"><path d="M5.500 19h27" stroke="#000" stroke-width="1.100" fill="none"/><circle cx="19" cy="19" r="3.900" fill="none" stroke="#f00" stroke-width="1.100"/><path d="M15.1 19h7.800M19 15.1v7.800" stroke="#f00" stroke-width="1.100"/></svg></div>
<div class="btn" style="left:44px;top:604px;width:40px;height:40px"><svg width="38" height="38" viewBox="0.5 0.5 38 38"><path d="M19 5.500v27" stroke="#000" stroke-width="1.100" fill="none"/><circle cx="19" cy="19" r="3.900" fill="none" stroke="#f00" stroke-width="1.100"/><path d="M15.1 19h7.800M19 15.1v7.800" stroke="#f00" stroke-width="1.100"/></svg></div>
<div class="btn" style="left:4px;top:644px;width:40px;height:40px"><svg width="38" height="38" viewBox="0.5 0.5 38 38"><path d="M9 30l21.500-12.500" stroke="#000" stroke-width="1.100" fill="none"/><path d="M9.0 9.5L9.0 4.5M14.3 10.2L15.6 5.4M19.2 12.2L21.8 7.9M23.5 15.5L27.0 12.0M28.8 24.7L33.6 23.4M29.5 30.0L34.5 30.0" stroke="#8a8a8a" stroke-width="1"/><circle cx="9" cy="30" r="3.900" fill="none" stroke="#f00" stroke-width="1.100"/><path d="M5.1 30h7.800M9 26.1v7.800" stroke="#f00" stroke-width="1.100"/></svg></div>
<div class="btn" style="left:4px;top:692px;width:40px;height:40px"><svg width="38" height="38" viewBox="0.5 0.5 38 38"><circle cx="16" cy="13" r="3.900" fill="none" stroke="#f00" stroke-width="1.100"/><path d="M12.1 13h7.800M16 9.1v7.800" stroke="#f00" stroke-width="1.100"/><path d="M17.500 15.500v13l3.200-2.800 2.200 5 2-.9-2.200-4.900h4.300z" fill="#fff" stroke="#555" stroke-width="1.100" stroke-linejoin="round"/></svg></div>
<div class="btn" style="left:44px;top:692px;width:40px;height:40px"><svg width="38" height="38" viewBox="0.5 0.5 38 38"><ellipse cx="12.500" cy="14.500" rx="3" ry="4" fill="none" stroke="#000" stroke-width="1.700"/><path d="M15.500 13.700h14" stroke="#000" stroke-width="2"/><path d="M25 14v4M28.300 13v6" stroke="#000" stroke-width="2.200"/><circle cx="19" cy="28" r="3.900" fill="none" stroke="#f00" stroke-width="1.100"/><path d="M15.1 28h7.800M19 24.1v7.800" stroke="#f00" stroke-width="1.100"/></svg></div>
</div>
<div class="a" style="left:88px;top:134px;width:537px;height:31px;background:#ebe8e4;border-bottom:1px solid #c4c1bc;border-top:0"></div>
<div class="a" style="left:88px;top:135px;width:268px;height:31px;background:linear-gradient(#f8f6f3,#f0eeea);border:1px solid #c4c1bc;border-bottom:0;border-radius:3px 3px 0 0"></div>
<div class="t" style="left:164px;top:142px;font-size:13px">* piramide su xz.dxf</div>
<svg class="a" style="left:101px;top:141px" width="15" height="15" viewBox="0 0 15 15" ><circle cx="7.100" cy="7.600" r="5.500" fill="#fbfbfb" stroke="#2b4087" stroke-width="1.900"/><path d="M3.500 4.300a5.500 5.500 0 0 1 4.500-2.100" stroke="#8fa3d6" stroke-width="1.700" fill="none"/><path d="M4 7.600h5M6.500 5v5" stroke="#b9b9c4" stroke-width=".7"/><path d="M4.500 9.300h3" stroke="#e9a0a0" stroke-width=".7"/><path d="M7.700 8.500l4.300 4.300" stroke="#f3a81c" stroke-width="2.100"/><path d="M11.800 12.600l1.300 1.300" stroke="#d9606a" stroke-width="2.100"/></svg>
<svg class="a" style="left:324px;top:142px" width="17" height="15" viewBox="0 0 17 15" ><path d="M2.200 13.600Q8 9 12.300 2.300l1.600 1.300Q9.500 10.500 2.400 13.900z" fill="#111"/><path d="M5 2.200l.7-.2Q9 7 14.800 11.500l-1.200 1.900Q8.500 8.500 5 2.200z" fill="#111"/><path d="M2.200 13.700Q8 9.200 13 2.800M5.300 2.200Q9 7.500 14.300 12.400" stroke="#111" stroke-width="1.100" fill="none" stroke-linecap="round"/><path d="M9.300 8L13 3.200M9.800 8.300L14 12" stroke="#111" stroke-width="2.100" fill="none" stroke-linecap="round"/></svg>
<svg class="a" style="left:89px;top:166px" width="536" height="704" viewBox="103 177 536 704" ><g font-family="Liberation Sans,sans-serif" font-size="11.500" fill="#1a1a1a"><text x="151.5" y="189.700" text-anchor="middle">0</text><text x="192.5" y="189.700" text-anchor="middle">20</text><text x="234.5" y="189.700" text-anchor="middle">40</text><text x="276.5" y="189.700" text-anchor="middle">60</text><text x="317.5" y="189.700" text-anchor="middle">80</text><text x="359.5" y="189.700" text-anchor="middle">100</text><text x="401.5" y="189.700" text-anchor="middle">120</text><text x="442.5" y="189.700" text-anchor="middle">140</text><text x="484.5" y="189.700" text-anchor="middle">160</text><text x="526.5" y="189.700" text-anchor="middle">180</text><text x="567.5" y="189.700" text-anchor="middle">200</text><text x="609.5" y="189.700" text-anchor="middle">220</text><text transform="translate(114.300 854.5) rotate(-90)" text-anchor="middle">0</text><text transform="translate(114.300 812.5) rotate(-90)" text-anchor="middle">20</text><text transform="translate(114.300 771.5) rotate(-90)" text-anchor="middle">40</text><text transform="translate(114.300 729.5) rotate(-90)" text-anchor="middle">60</text><text transform="translate(114.300 687.5) rotate(-90)" text-anchor="middle">80</text><text transform="translate(114.300 646.5) rotate(-90)" text-anchor="middle">100</text><text transform="translate(114.300 604.5) rotate(-90)" text-anchor="middle">120</text><text transform="translate(114.300 562.5) rotate(-90)" text-anchor="middle">140</text><text transform="translate(114.300 521.5) rotate(-90)" text-anchor="middle">160</text><text transform="translate(114.300 479.5) rotate(-90)" text-anchor="middle">180</text><text transform="translate(114.300 437.5) rotate(-90)" text-anchor="middle">200</text><text transform="translate(114.300 396.5) rotate(-90)" text-anchor="middle">220</text><text transform="translate(114.300 354.5) rotate(-90)" text-anchor="middle">240</text><text transform="translate(114.300 312.5) rotate(-90)" text-anchor="middle">260</text><text transform="translate(114.300 271.5) rotate(-90)" text-anchor="middle">280</text><text transform="translate(114.300 229.5) rotate(-90)" text-anchor="middle">300</text></g><path d="M131.5 198V202M152.5 195V202M172.5 198V202M193.5 195V202M214.5 198V202M235.5 195V202M256.5 198V202M277.5 195V202M297.5 198V202M318.5 195V202M339.5 198V202M360.5 195V202M381.5 198V202M402.5 195V202M422.5 198V202M443.5 195V202M464.5 198V202M485.5 195V202M506.5 198V202M527.5 195V202M547.5 198V202M568.5 195V202M589.5 198V202M610.5 195V202M124 875.5H127M120 854.5H127M124 833.5H127M120 812.5H127M124 792.5H127M120 771.5H127M124 750.5H127M120 729.5H127M124 708.5H127M120 687.5H127M124 666.5H127M120 646.5H127M124 625.5H127M120 604.5H127M124 583.5H127M120 562.5H127M124 542.5H127M120 521.5H127M124 500.5H127M120 479.5H127M124 458.5H127M120 437.5H127M124 416.5H127M120 396.5H127M124 375.5H127M120 354.5H127M124 333.5H127M120 312.5H127M124 292.5H127M120 271.5H127M124 250.5H127M120 229.5H127M124 208.5H127" stroke="#111" stroke-width="1" fill="none"/><path d="M607.500 194.800h6l-3 3z" fill="#000"/><path d="M610.500 195V202" stroke="#000"/><path d="M119.800 539.500v6l3-3z" fill="#000"/><path d="M120 542.500H127" stroke="#000"/></svg>
<svg class="a" style="left:113px;top:191px;background:#fff" width="497" height="678" viewBox="127 202 497 678" shape-rendering="crispEdges"><line class="mg" x1="152.5" y1="202" x2="152.5" y2="880"/>
<line class="mg" x1="360.5" y1="202" x2="360.5" y2="880"/>
<line class="mg" x1="568.5" y1="202" x2="568.5" y2="880"/>
<line class="mg" x1="127" y1="854.5" x2="624" y2="854.5"/>
<line class="mg" x1="127" y1="646.5" x2="624" y2="646.5"/>
<line class="mg" x1="127" y1="437.5" x2="624" y2="437.5"/>
<line class="mg" x1="127" y1="229.5" x2="624" y2="229.5"/>
<line class="cur" x1="127" y1="542.5" x2="624" y2="542.5"/>
<line class="cur" x1="610.5" y1="202" x2="610.5" y2="880"/>
<rect class="k" x="152.5" y="229.5" width="416" height="625" fill="none"/>
<line class="k" x1="152.1" y1="646.5" x2="568.77" y2="646.5"/>
<line class="k" x1="360.5" y1="854.5" x2="360.5" y2="229.5"/>
<line class="k" x1="360.43" y1="646.17" x2="160.89" y2="530.96" style="stroke-width:0.90"/>
<line class="k" x1="360.43" y1="646.17" x2="559.98" y2="530.96" style="stroke-width:0.90"/>
<line class="o" x1="485.5" y1="667.5" x2="538.5" y2="755.5" style="stroke-width:0.89"/>
<line class="o" x1="538.5" y1="755.5" x2="470.5" y2="833.5" style="stroke-width:0.78"/>
<line class="o" x1="470.5" y1="833.5" x2="375.5" y2="792.5" style="stroke-width:0.95"/>
<line class="o" x1="375.5" y1="792.5" x2="384.5" y2="689.5"/>
<line class="o" x1="384.5" y1="689.5" x2="485.5" y2="667.5"/>
<line class="o" x1="485.5" y1="667.5" x2="423" y2="813" style="stroke-width:0.95"/>
<line class="o" x1="384.5" y1="689.5" x2="504.5" y2="794.5" style="stroke-width:0.78"/>
<line class="o" x1="485.5" y1="667.5" x2="360.43" y2="667.5"/>
<path class="o" style="stroke-width:.86" d="M342.34 634.86A21.33 21.33 0 0 0 360.43 667.5"/>
<line class="o" x1="485.5" y1="667.5" x2="485.5" y2="646.17"/>
<path class="o" style="stroke-width:.86" d="M485.5 646.17A125.07 125.07 0 0 0 360.43 521.1"/>
<line class="o" x1="360.43" y1="521.1" x2="198.5" y2="427.61" style="stroke-width:0.90"/>
<line class="o" x1="342.5" y1="635.5" x2="342.5" y2="448"/>
<line class="o" x1="538.5" y1="755.5" x2="360.43" y2="755.5"/>
<path class="o" style="stroke-width:.86" d="M267.71 588.23A109.33 109.33 0 0 0 360.43 755.5"/>
<line class="o" x1="538.5" y1="755.5" x2="538.5" y2="646.17"/>
<path class="o" style="stroke-width:.86" d="M538.5 646.17A178.07 178.07 0 0 0 360.43 468.1"/>
<line class="o" x1="360.43" y1="468.1" x2="198.5" y2="374.61" style="stroke-width:0.90"/>
<line class="o" x1="265.5" y1="591.5" x2="265.5" y2="404"/>
<line class="o" x1="470.5" y1="833.5" x2="360.43" y2="833.5"/>
<path class="o" style="stroke-width:.86" d="M201.57 546.9A187.33 187.33 0 0 0 360.43 833.5"/>
<line class="o" x1="470.5" y1="833.5" x2="470.5" y2="646.17"/>
<path class="o" style="stroke-width:.86" d="M470.5 646.17A110.07 110.07 0 0 0 360.43 536.1"/>
<line class="o" x1="360.43" y1="536.1" x2="198.5" y2="442.61" style="stroke-width:0.90"/>
<line class="o" x1="198.5" y1="552.5" x2="198.5" y2="365"/>
<line class="o" x1="375.5" y1="792.5" x2="360.43" y2="792.5"/>
<path class="o" style="stroke-width:.86" d="M236.34 568.62A146.33 146.33 0 0 0 360.43 792.5"/>
<line class="o" x1="375.5" y1="792.5" x2="375.5" y2="646.17"/>
<path class="o" style="stroke-width:.86" d="M375.5 646.17A15.07 15.07 0 0 0 360.43 631.1"/>
<line class="o" x1="360.43" y1="631.1" x2="198.5" y2="537.61" style="stroke-width:0.90"/>
<line class="o" x1="233.5" y1="573" x2="233.5" y2="385.5"/>
<line class="o" x1="384.5" y1="689.5" x2="360.43" y2="689.5"/>
<path class="o" style="stroke-width:.86" d="M323.68 623.2A43.33 43.33 0 0 0 360.43 689.5"/>
<line class="o" x1="384.5" y1="689.5" x2="384.5" y2="646.17"/>
<path class="o" style="stroke-width:.86" d="M384.5 646.17A24.07 24.07 0 0 0 360.43 622.1"/>
<line class="o" x1="360.43" y1="622.1" x2="198.5" y2="528.61" style="stroke-width:0.90"/>
<line class="o" x1="322.5" y1="624.5" x2="322.5" y2="437"/>
<line class="od" x1="450.5" y1="747.5" x2="360.43" y2="747.5"/>
<path class="od" style="stroke-width:.86" d="M274.5 592.47A101.33 101.33 0 0 0 360.43 747.5"/>
<line class="od" x1="450.5" y1="747.5" x2="450.5" y2="646.17"/>
<path class="od" style="stroke-width:.86" d="M450.5 646.17A90.07 90.07 0 0 0 360.43 556.1"/>
<line class="od" x1="360.43" y1="556.1" x2="198.5" y2="462.61" style="stroke-width:0.90"/>
<line class="od" x1="272.5" y1="595.5" x2="272.5" y2="408"/>
<line class="od" x1="610.5" y1="542" x2="610.5" y2="354.5"/>
<path d="M132.1 854.5H172.1M152.1 834.5V874.5" stroke="#ff0000" stroke-width="1" fill="none"/>
<g stroke="#a32020" stroke-width="1" fill="none"><circle cx="272.5" cy="595.5" r="5"/><path d="M267.5 595.5H277.5M272.5 590.5V600.5"/></g>
<g shape-rendering="auto" style="filter:grayscale(1)"><text x="154.800" y="529" class="lbl">x</text><text x="552" y="524" class="lbl">y</text><text x="349.300" y="242" class="lbl">z</text></g><path d="M131 876.5h1M131 855.5h1M131 834.5h1M131 813.5h1M131 792.5h1M131 772.5h1M131 751.5h1M131 730.5h1M131 709.5h1M131 688.5h1M131 667.5h1M131 646.5h1M131 625.5h1M131 605.5h1M131 584.5h1M131 563.5h1M131 542.5h1M131 521.5h1M131 500.5h1M131 479.5h1M131 458.5h1M131 438.5h1M131 417.5h1M131 396.5h1M131 375.5h1M131 354.5h1M131 333.5h1M131 312.5h1M131 291.5h1M131 270.5h1M131 250.5h1M131 229.5h1M131 208.5h1M152 876.5h1M152 855.5h1M152 834.5h1M152 813.5h1M152 792.5h1M152 772.5h1M152 751.5h1M152 730.5h1M152 709.5h1M152 688.5h1M152 667.5h1M152 646.5h1M152 625.5h1M152 605.5h1M152 584.5h1M152 563.5h1M152 542.5h1M152 521.5h1M152 500.5h1M152 479.5h1M152 458.5h1M152 438.5h1M152 417.5h1M152 396.5h1M152 375.5h1M152 354.5h1M152 333.5h1M152 312.5h1M152 291.5h1M152 270.5h1M152 250.5h1M152 229.5h1M152 208.5h1M173 876.5h1M173 855.5h1M173 834.5h1M173 813.5h1M173 792.5h1M173 772.5h1M173 751.5h1M173 730.5h1M173 709.5h1M173 688.5h1M173 667.5h1M173 646.5h1M173 625.5h1M173 605.5h1M173 584.5h1M173 563.5h1M173 542.5h1M173 521.5h1M173 500.5h1M173 479.5h1M173 458.5h1M173 438.5h1M173 417.5h1M173 396.5h1M173 375.5h1M173 354.5h1M173 333.5h1M173 312.5h1M173 291.5h1M173 270.5h1M173 250.5h1M173 229.5h1M173 208.5h1M194 876.5h1M194 855.5h1M194 834.5h1M194 813.5h1M194 792.5h1M194 772.5h1M194 751.5h1M194 730.5h1M194 709.5h1M194 688.5h1M194 667.5h1M194 646.5h1M194 625.5h1M194 605.5h1M194 584.5h1M194 563.5h1M194 542.5h1M194 521.5h1M194 500.5h1M194 479.5h1M194 458.5h1M194 438.5h1M194 417.5h1M194 396.5h1M194 375.5h1M194 354.5h1M194 333.5h1M194 312.5h1M194 291.5h1M194 270.5h1M194 250.5h1M194 229.5h1M194 208.5h1M214 876.5h1M214 855.5h1M214 834.5h1M214 813.5h1M214 792.5h1M214 772.5h1M214 751.5h1M214 730.5h1M214 709.5h1M214 688.5h1M214 667.5h1M214 646.5h1M214 625.5h1M214 605.5h1M214 584.5h1M214 563.5h1M214 542.5h1M214 521.5h1M214 500.5h1M214 479.5h1M214 458.5h1M214 438.5h1M214 417.5h1M214 396.5h1M214 375.5h1M214 354.5h1M214 333.5h1M214 312.5h1M214 291.5h1M214 270.5h1M214 250.5h1M214 229.5h1M214 208.5h1M235 876.5h1M235 855.5h1M235 834.5h1M235 813.5h1M235 792.5h1M235 772.5h1M235 751.5h1M235 730.5h1M235 709.5h1M235 688.5h1M235 667.5h1M235 646.5h1M235 625.5h1M235 605.5h1M235 584.5h1M235 563.5h1M235 542.5h1M235 521.5h1M235 500.5h1M235 479.5h1M235 458.5h1M235 438.5h1M235 417.5h1M235 396.5h1M235 375.5h1M235 354.5h1M235 333.5h1M235 312.5h1M235 291.5h1M235 270.5h1M235 250.5h1M235 229.5h1M235 208.5h1M256 876.5h1M256 855.5h1M256 834.5h1M256 813.5h1M256 792.5h1M256 772.5h1M256 751.5h1M256 730.5h1M256 709.5h1M256 688.5h1M256 667.5h1M256 646.5h1M256 625.5h1M256 605.5h1M256 584.5h1M256 563.5h1M256 542.5h1M256 521.5h1M256 500.5h1M256 479.5h1M256 458.5h1M256 438.5h1M256 417.5h1M256 396.5h1M256 375.5h1M256 354.5h1M256 333.5h1M256 312.5h1M256 291.5h1M256 270.5h1M256 250.5h1M256 229.5h1M256 208.5h1M277 876.5h1M277 855.5h1M277 834.5h1M277 813.5h1M277 792.5h1M277 772.5h1M277 751.5h1M277 730.5h1M277 709.5h1M277 688.5h1M277 667.5h1M277 646.5h1M277 625.5h1M277 605.5h1M277 584.5h1M277 563.5h1M277 542.5h1M277 521.5h1M277 500.5h1M277 479.5h1M277 458.5h1M277 438.5h1M277 417.5h1M277 396.5h1M277 375.5h1M277 354.5h1M277 333.5h1M277 312.5h1M277 291.5h1M277 270.5h1M277 250.5h1M277 229.5h1M277 208.5h1M298 876.5h1M298 855.5h1M298 834.5h1M298 813.5h1M298 792.5h1M298 772.5h1M298 751.5h1M298 730.5h1M298 709.5h1M298 688.5h1M298 667.5h1M298 646.5h1M298 625.5h1M298 605.5h1M298 584.5h1M298 563.5h1M298 542.5h1M298 521.5h1M298 500.5h1M298 479.5h1M298 458.5h1M298 438.5h1M298 417.5h1M298 396.5h1M298 375.5h1M298 354.5h1M298 333.5h1M298 312.5h1M298 291.5h1M298 270.5h1M298 250.5h1M298 229.5h1M298 208.5h1M319 876.5h1M319 855.5h1M319 834.5h1M319 813.5h1M319 792.5h1M319 772.5h1M319 751.5h1M319 730.5h1M319 709.5h1M319 688.5h1M319 667.5h1M319 646.5h1M319 625.5h1M319 605.5h1M319 584.5h1M319 563.5h1M319 542.5h1M319 521.5h1M319 500.5h1M319 479.5h1M319 458.5h1M319 438.5h1M319 417.5h1M319 396.5h1M319 375.5h1M319 354.5h1M319 333.5h1M319 312.5h1M319 291.5h1M319 270.5h1M319 250.5h1M319 229.5h1M319 208.5h1M340 876.5h1M340 855.5h1M340 834.5h1M340 813.5h1M340 792.5h1M340 772.5h1M340 751.5h1M340 730.5h1M340 709.5h1M340 688.5h1M340 667.5h1M340 646.5h1M340 625.5h1M340 605.5h1M340 584.5h1M340 563.5h1M340 542.5h1M340 521.5h1M340 500.5h1M340 479.5h1M340 458.5h1M340 438.5h1M340 417.5h1M340 396.5h1M340 375.5h1M340 354.5h1M340 333.5h1M340 312.5h1M340 291.5h1M340 270.5h1M340 250.5h1M340 229.5h1M340 208.5h1M360 876.5h1M360 855.5h1M360 834.5h1M360 813.5h1M360 792.5h1M360 772.5h1M360 751.5h1M360 730.5h1M360 709.5h1M360 688.5h1M360 667.5h1M360 646.5h1M360 625.5h1M360 605.5h1M360 584.5h1M360 563.5h1M360 542.5h1M360 521.5h1M360 500.5h1M360 479.5h1M360 458.5h1M360 438.5h1M360 417.5h1M360 396.5h1M360 375.5h1M360 354.5h1M360 333.5h1M360 312.5h1M360 291.5h1M360 270.5h1M360 250.5h1M360 229.5h1M360 208.5h1M381 876.5h1M381 855.5h1M381 834.5h1M381 813.5h1M381 792.5h1M381 772.5h1M381 751.5h1M381 730.5h1M381 709.5h1M381 688.5h1M381 667.5h1M381 646.5h1M381 625.5h1M381 605.5h1M381 584.5h1M381 563.5h1M381 542.5h1M381 521.5h1M381 500.5h1M381 479.5h1M381 458.5h1M381 438.5h1M381 417.5h1M381 396.5h1M381 375.5h1M381 354.5h1M381 333.5h1M381 312.5h1M381 291.5h1M381 270.5h1M381 250.5h1M381 229.5h1M381 208.5h1M402 876.5h1M402 855.5h1M402 834.5h1M402 813.5h1M402 792.5h1M402 772.5h1M402 751.5h1M402 730.5h1M402 709.5h1M402 688.5h1M402 667.5h1M402 646.5h1M402 625.5h1M402 605.5h1M402 584.5h1M402 563.5h1M402 542.5h1M402 521.5h1M402 500.5h1M402 479.5h1M402 458.5h1M402 438.5h1M402 417.5h1M402 396.5h1M402 375.5h1M402 354.5h1M402 333.5h1M402 312.5h1M402 291.5h1M402 270.5h1M402 250.5h1M402 229.5h1M402 208.5h1M423 876.5h1M423 855.5h1M423 834.5h1M423 813.5h1M423 792.5h1M423 772.5h1M423 751.5h1M423 730.5h1M423 709.5h1M423 688.5h1M423 667.5h1M423 646.5h1M423 625.5h1M423 605.5h1M423 584.5h1M423 563.5h1M423 542.5h1M423 521.5h1M423 500.5h1M423 479.5h1M423 458.5h1M423 438.5h1M423 417.5h1M423 396.5h1M423 375.5h1M423 354.5h1M423 333.5h1M423 312.5h1M423 291.5h1M423 270.5h1M423 250.5h1M423 229.5h1M423 208.5h1M444 876.5h1M444 855.5h1M444 834.5h1M444 813.5h1M444 792.5h1M444 772.5h1M444 751.5h1M444 730.5h1M444 709.5h1M444 688.5h1M444 667.5h1M444 646.5h1M444 625.5h1M444 605.5h1M444 584.5h1M444 563.5h1M444 542.5h1M444 521.5h1M444 500.5h1M444 479.5h1M444 458.5h1M444 438.5h1M444 417.5h1M444 396.5h1M444 375.5h1M444 354.5h1M444 333.5h1M444 312.5h1M444 291.5h1M444 270.5h1M444 250.5h1M444 229.5h1M444 208.5h1M465 876.5h1M465 855.5h1M465 834.5h1M465 813.5h1M465 792.5h1M465 772.5h1M465 751.5h1M465 730.5h1M465 709.5h1M465 688.5h1M465 667.5h1M465 646.5h1M465 625.5h1M465 605.5h1M465 584.5h1M465 563.5h1M465 542.5h1M465 521.5h1M465 500.5h1M465 479.5h1M465 458.5h1M465 438.5h1M465 417.5h1M465 396.5h1M465 375.5h1M465 354.5h1M465 333.5h1M465 312.5h1M465 291.5h1M465 270.5h1M465 250.5h1M465 229.5h1M465 208.5h1M486 876.5h1M486 855.5h1M486 834.5h1M486 813.5h1M486 792.5h1M486 772.5h1M486 751.5h1M486 730.5h1M486 709.5h1M486 688.5h1M486 667.5h1M486 646.5h1M486 625.5h1M486 605.5h1M486 584.5h1M486 563.5h1M486 542.5h1M486 521.5h1M486 500.5h1M486 479.5h1M486 458.5h1M486 438.5h1M486 417.5h1M486 396.5h1M486 375.5h1M486 354.5h1M486 333.5h1M486 312.5h1M486 291.5h1M486 270.5h1M486 250.5h1M486 229.5h1M486 208.5h1M506 876.5h1M506 855.5h1M506 834.5h1M506 813.5h1M506 792.5h1M506 772.5h1M506 751.5h1M506 730.5h1M506 709.5h1M506 688.5h1M506 667.5h1M506 646.5h1M506 625.5h1M506 605.5h1M506 584.5h1M506 563.5h1M506 542.5h1M506 521.5h1M506 500.5h1M506 479.5h1M506 458.5h1M506 438.5h1M506 417.5h1M506 396.5h1M506 375.5h1M506 354.5h1M506 333.5h1M506 312.5h1M506 291.5h1M506 270.5h1M506 250.5h1M506 229.5h1M506 208.5h1M527 876.5h1M527 855.5h1M527 834.5h1M527 813.5h1M527 792.5h1M527 772.5h1M527 751.5h1M527 730.5h1M527 709.5h1M527 688.5h1M527 667.5h1M527 646.5h1M527 625.5h1M527 605.5h1M527 584.5h1M527 563.5h1M527 542.5h1M527 521.5h1M527 500.5h1M527 479.5h1M527 458.5h1M527 438.5h1M527 417.5h1M527 396.5h1M527 375.5h1M527 354.5h1M527 333.5h1M527 312.5h1M527 291.5h1M527 270.5h1M527 250.5h1M527 229.5h1M527 208.5h1M548 876.5h1M548 855.5h1M548 834.5h1M548 813.5h1M548 792.5h1M548 772.5h1M548 751.5h1M548 730.5h1M548 709.5h1M548 688.5h1M548 667.5h1M548 646.5h1M548 625.5h1M548 605.5h1M548 584.5h1M548 563.5h1M548 542.5h1M548 521.5h1M548 500.5h1M548 479.5h1M548 458.5h1M548 438.5h1M548 417.5h1M548 396.5h1M548 375.5h1M548 354.5h1M548 333.5h1M548 312.5h1M548 291.5h1M548 270.5h1M548 250.5h1M548 229.5h1M548 208.5h1M569 876.5h1M569 855.5h1M569 834.5h1M569 813.5h1M569 792.5h1M569 772.5h1M569 751.5h1M569 730.5h1M569 709.5h1M569 688.5h1M569 667.5h1M569 646.5h1M569 625.5h1M569 605.5h1M569 584.5h1M569 563.5h1M569 542.5h1M569 521.5h1M569 500.5h1M569 479.5h1M569 458.5h1M569 438.5h1M569 417.5h1M569 396.5h1M569 375.5h1M569 354.5h1M569 333.5h1M569 312.5h1M569 291.5h1M569 270.5h1M569 250.5h1M569 229.5h1M569 208.5h1M590 876.5h1M590 855.5h1M590 834.5h1M590 813.5h1M590 792.5h1M590 772.5h1M590 751.5h1M590 730.5h1M590 709.5h1M590 688.5h1M590 667.5h1M590 646.5h1M590 625.5h1M590 605.5h1M590 584.5h1M590 563.5h1M590 542.5h1M590 521.5h1M590 500.5h1M590 479.5h1M590 458.5h1M590 438.5h1M590 417.5h1M590 396.5h1M590 375.5h1M590 354.5h1M590 333.5h1M590 312.5h1M590 291.5h1M590 270.5h1M590 250.5h1M590 229.5h1M590 208.5h1M611 876.5h1M611 855.5h1M611 834.5h1M611 813.5h1M611 792.5h1M611 772.5h1M611 751.5h1M611 730.5h1M611 709.5h1M611 688.5h1M611 667.5h1M611 646.5h1M611 625.5h1M611 605.5h1M611 584.5h1M611 563.5h1M611 542.5h1M611 521.5h1M611 500.5h1M611 479.5h1M611 458.5h1M611 438.5h1M611 417.5h1M611 396.5h1M611 375.5h1M611 354.5h1M611 333.5h1M611 312.5h1M611 291.5h1M611 270.5h1M611 250.5h1M611 229.5h1M611 208.5h1" stroke="#c9c9ce" stroke-width="1" fill="none" shape-rendering="crispEdges"/></svg>
<div class="a" style="left:610px;top:191px;width:14px;height:678px;background:#e5e3e0;border-left:1px solid #bdbab5"></div>
<div class="a" style="left:611px;top:191px;width:13px;height:14px;background:linear-gradient(#fbfaf9,#f3f1ee);border-bottom:1px solid #cbc8c3"></div>
<div class="a" style="left:611px;top:855px;width:13px;height:14px;background:linear-gradient(#fbfaf9,#f3f1ee);border-top:1px solid #cbc8c3"></div>
<div class="a" style="left:611px;top:430px;width:13px;height:198px;background:linear-gradient(90deg,#ecebe9,#fefefe 45%,#f6f5f3);border-top:1px solid #c9c6c1;border-bottom:1px solid #c9c6c1"></div>
<svg class="a" style="left:612px;top:194px" width="11" height="8" viewBox="0 0 11 8" ><path d="M1.200 6h7.700l-3.850-3.900z" fill="#555"/></svg>
<svg class="a" style="left:612px;top:858px" width="11" height="8" viewBox="0 0 11 8" ><path d="M1.200 2h7.700l-3.850 3.900z" fill="#555"/></svg>
<div class="a" style="left:113px;top:870px;width:443px;height:14px;background:#e5e3e0"></div>
<div class="a" style="left:113px;top:870px;width:14px;height:14px;background:linear-gradient(#fbfaf9,#f3f1ee);border-right:1px solid #cbc8c3"></div>
<div class="a" style="left:542px;top:870px;width:14px;height:14px;background:linear-gradient(#fbfaf9,#f3f1ee);border-left:1px solid #cbc8c3"></div>
<div class="a" style="left:286px;top:870px;width:104px;height:14px;background:linear-gradient(#ecebe9,#fefefe 45%,#f6f5f3);border-left:1px solid #c9c6c1;border-right:1px solid #c9c6c1"></div>
<svg class="a" style="left:115px;top:872px" width="8" height="11" viewBox="0 0 8 11" ><path d="M6.500 1.200v7.700l-3.900-3.850z" fill="#555"/></svg>
<svg class="a" style="left:545px;top:872px" width="8" height="11" viewBox="0 0 8 11" ><path d="M2 1.200v7.700l3.900-3.850z" fill="#555"/></svg>
<div class="t" style="left:577px;top:870px;font-size:12px">10 &lt; 100</div>
<div class="gd" style="left:348px;top:886px"></div><div class="gd" style="left:351px;top:886px"></div><div class="gd" style="left:354px;top:886px"></div><div class="gd" style="left:357px;top:886px"></div><div class="gd" style="left:360px;top:886px"></div><div class="gd" style="left:363px;top:886px"></div>
<div class="a" style="left:88px;top:891px;width:536px;height:79px;border-left:1px solid #c4c1bc;border-bottom:1px solid #c4c1bc;border-right:1px solid #c4c1bc"></div>
<div class="a" style="left:89px;top:891px;width:521px;height:53px;background:#fff;border-bottom:1px solid #b9b6b1"></div>
<div class="t" style="left:93px;top:890px;color:#0000d0;font-size:13px"><i style="font-size:11.900px">Command:</i> linemenu</div>
<div class="t" style="left:93px;top:907px;color:#0000d0;font-size:13px"><i style="font-size:11.900px">Command:</i> lineangle</div>
<div class="t" style="left:93px;top:924px;color:#0000d0;font-size:13px"><i style="font-size:11.900px">Command:</i> linevertical</div>
<div class="a" style="left:610px;top:891px;width:14px;height:53px;background:#fff;border-left:1px solid #dcdad6"></div>
<div class="a" style="left:611px;top:891px;width:13px;height:14px;background:#f0eeea"></div>
<div class="a" style="left:611px;top:930px;width:13px;height:14px;background:#f0eeea"></div>
<svg class="a" style="left:612px;top:894px" width="11" height="8" viewBox="0 0 11 8" ><path d="M1 7h9l-4.500-5z" fill="#555"/></svg>
<svg class="a" style="left:612px;top:933px" width="11" height="8" viewBox="0 0 11 8" ><path d="M1 1h9l-4.500 5z" fill="#555"/></svg>
<div class="t" style="left:89px;top:951px;font-size:12.600px">Position:</div>
<div class="a" style="left:141px;top:949px;width:456px;height:19px;background:#fff"></div>
<div class="btn" style="left:599px;top:947px;width:24px;height:22px;border-radius:2px"><svg width="22" height="20" viewBox="0 0 22 20"><rect x="4.500" y="4.500" width="13" height="10" fill="#fff" stroke="#111"/><rect x="4" y="4" width="14" height="3.500" fill="#111"/></svg></div>
<div class="t" style="left:634px;top:136px;font-size:12.400px">Layer List</div>
<svg class="a" style="left:848px;top:138px" width="11" height="11" viewBox="0 0 11 11" ><rect x=".5" y=".5" width="10" height="10" rx="2" fill="none" stroke="#555"/><rect x="4.500" y="2.500" width="4" height="4" fill="#f0eeea" stroke="#444" stroke-width=".9"/><rect x="2.500" y="4.500" width="4" height="4" fill="#f0eeea" stroke="#444" stroke-width=".9"/></svg><svg class="a" style="left:862px;top:138px" width="11" height="11" viewBox="0 0 11 11" ><rect x=".5" y=".5" width="10" height="10" rx="2" fill="none" stroke="#555"/><path d="M3 3l5 5M8 3l-5 5" stroke="#222" stroke-width="1.800"/></svg>
<div class="btn" style="left:630px;top:153px;width:48px;height:23px;border-radius:3px;border-color:#bcb9b4;background:linear-gradient(#fcfcfb,#eceae7)"><svg class="a" style="left:15px;top:3px" width="17" height="15" viewBox="-.5 -.5 17 15" overflow="visible"><g opacity="1"><path d="M.3 7C3 1.500 11.500 1 14.700 6.300 11.500 11.300 4 12 .3 7z" fill="#fff" stroke="#111" stroke-width="1.300"/><path d="M.3 6.800C3 1.300 11.500 .8 14.700 6.100 11.500 2.800 4 3.200 .3 6.800z" fill="#111" stroke="#111" stroke-width="1.200" stroke-linejoin="round"/><circle cx="7.700" cy="6.500" r="3.400" fill="#111"/><circle cx="6.400" cy="5.200" r="1.100" fill="#fff"/></g></svg></div>
<div class="btn" style="left:679px;top:153px;width:48px;height:23px;border-radius:3px;border-color:#bcb9b4;background:linear-gradient(#fcfcfb,#eceae7)"><svg class="a" style="left:15px;top:3px" width="17" height="15" viewBox="-.5 -.5 17 15" overflow="visible"><g opacity="0.8"><path d="M.3 7C3 1.500 11.500 1 14.700 6.300 11.500 11.300 4 12 .3 7z" fill="#fff" stroke="#8a8a8a" stroke-width="1.300"/><path d="M.3 6.800C3 1.300 11.500 .8 14.700 6.100 11.500 2.800 4 3.200 .3 6.800z" fill="#8a8a8a" stroke="#8a8a8a" stroke-width="1.200" stroke-linejoin="round"/><circle cx="7.700" cy="6.500" r="3.400" fill="#8a8a8a"/><circle cx="6.400" cy="5.200" r="1.100" fill="#fff"/></g></svg></div>
<div class="btn" style="left:728px;top:153px;width:48px;height:23px;border-radius:3px;border-color:#bcb9b4;background:linear-gradient(#fcfcfb,#eceae7)"><svg class="a" style="left:15px;top:3px" width="17" height="15" viewBox="-.5 -.5 17 15" overflow="visible"><path d="M1.700 6.500h11.600M7.500 .7v11.600" stroke="#e80000" stroke-width="2.500"/></svg></div>
<div class="btn" style="left:777px;top:153px;width:48px;height:23px;border-radius:3px;border-color:#bcb9b4;background:linear-gradient(#fcfcfb,#eceae7)"><svg class="a" style="left:15px;top:3px" width="17" height="15" viewBox="-.5 -.5 17 15" overflow="visible"><path d="M1.700 6.500h11.600" stroke="#e80000" stroke-width="2.800"/></svg></div>
<div class="btn" style="left:826px;top:153px;width:48px;height:23px;border-radius:3px;border-color:#bcb9b4;background:linear-gradient(#fcfcfb,#eceae7)"><svg class="a" style="left:15px;top:3px" width="17" height="15" viewBox="-.5 -.5 17 15" overflow="visible"><path d="M1 12.500l2-4.500 9-8 2.500 2.500-9 8z" fill="#e8a838" stroke="#9a6a18" stroke-width=".7"/><path d="M12 0l2.500 2.500 1-1L13 -1z" fill="#d33"/><path d="M1 12.500l1-2.300 1.300 1.300z" fill="#333"/></svg></div>
<div class="a" style="left:630px;top:176px;width:245px;height:447px;background:#fff;border:1px solid #c0bdb8"></div>
<svg class="a" style="left:634px;top:179px" width="16" height="13" viewBox="0 0 15 13" ><g opacity="1"><path d="M.3 7C3 1.500 11.500 1 14.700 6.300 11.500 11.300 4 12 .3 7z" fill="#fff" stroke="#111" stroke-width="1.300"/><path d="M.3 6.800C3 1.300 11.500 .8 14.700 6.100 11.500 2.800 4 3.200 .3 6.800z" fill="#111" stroke="#111" stroke-width="1.200" stroke-linejoin="round"/><circle cx="7.700" cy="6.500" r="3.400" fill="#111"/><circle cx="6.400" cy="5.200" r="1.100" fill="#fff"/></g></svg>
<svg class="a" style="left:654px;top:178px" width="11" height="15" viewBox="0 0 11 15" ><path d="M2 7V4.300a2.700 2.700 0 0 1 5.400 0V7" fill="none" stroke="#a8a8a8" stroke-width="1.400"/><rect x="0" y="6.500" width="9.500" height="7.500" fill="#a8a8a8"/></svg>
<div class="t" style="left:672px;top:177px;line-height:17px;height:17px;font-size:13.200px;">0</div>
<svg class="a" style="left:634px;top:196px" width="16" height="13" viewBox="0 0 15 13" ><g opacity="1"><path d="M.3 7C3 1.500 11.500 1 14.700 6.300 11.500 11.300 4 12 .3 7z" fill="#fff" stroke="#111" stroke-width="1.300"/><path d="M.3 6.800C3 1.300 11.500 .8 14.700 6.100 11.500 2.800 4 3.200 .3 6.800z" fill="#111" stroke="#111" stroke-width="1.200" stroke-linejoin="round"/><circle cx="7.700" cy="6.500" r="3.400" fill="#111"/><circle cx="6.400" cy="5.200" r="1.100" fill="#fff"/></g></svg>
<svg class="a" style="left:654px;top:195px" width="11" height="15" viewBox="0 0 11 15" ><path d="M2 7V4.300a2.700 2.700 0 0 1 5.400 0V7" fill="none" stroke="#a8a8a8" stroke-width="1.400"/><rect x="0" y="6.500" width="9.500" height="7.500" fill="#a8a8a8"/></svg>
<div class="t" style="left:672px;top:194px;line-height:17px;height:17px;font-size:13.200px;">3h</div>
<div class="a" style="left:631px;top:211px;width:243px;height:17px;background:#308cc6"></div>
<svg class="a" style="left:634px;top:213px" width="16" height="13" viewBox="0 0 15 13" ><g opacity="1"><path d="M.3 7C3 1.500 11.500 1 14.700 6.300 11.500 11.300 4 12 .3 7z" fill="#fff" stroke="#0d3d5c" stroke-width="1.300"/><path d="M.3 6.800C3 1.300 11.500 .8 14.700 6.100 11.500 2.800 4 3.200 .3 6.800z" fill="#0d3d5c" stroke="#0d3d5c" stroke-width="1.200" stroke-linejoin="round"/><circle cx="7.700" cy="6.500" r="3.400" fill="#0d3d5c"/><circle cx="6.400" cy="5.200" r="1.100" fill="#fff"/></g></svg>
<svg class="a" style="left:654px;top:212px" width="11" height="15" viewBox="0 0 11 15" ><path d="M2 7V4.300a2.700 2.700 0 0 1 5.400 0V7" fill="none" stroke="#7b99ae" stroke-width="1.400"/><rect x="0" y="6.500" width="9.500" height="7.500" fill="#7b99ae"/></svg>
<div class="t" style="left:672px;top:211px;line-height:17px;height:17px;font-size:13.200px;color:#fff">3h-tratt</div>
<svg class="a" style="left:634px;top:230px" width="16" height="13" viewBox="0 0 15 13" ><g opacity="1"><path d="M.3 7C3 1.500 11.500 1 14.700 6.300 11.500 11.300 4 12 .3 7z" fill="#fff" stroke="#111" stroke-width="1.300"/><path d="M.3 6.800C3 1.300 11.500 .8 14.700 6.100 11.500 2.800 4 3.200 .3 6.800z" fill="#111" stroke="#111" stroke-width="1.200" stroke-linejoin="round"/><circle cx="7.700" cy="6.500" r="3.400" fill="#111"/><circle cx="6.400" cy="5.200" r="1.100" fill="#fff"/></g></svg>
<svg class="a" style="left:654px;top:229px" width="11" height="15" viewBox="0 0 11 15" ><path d="M2 7V4.300a2.700 2.700 0 0 1 5.400 0V7" fill="none" stroke="#a8a8a8" stroke-width="1.400"/><rect x="0" y="6.500" width="9.500" height="7.500" fill="#a8a8a8"/></svg>
<div class="t" style="left:672px;top:228px;line-height:17px;height:17px;font-size:13.200px;">hb</div>
<svg class="a" style="left:634px;top:247px" width="16" height="13" viewBox="0 0 15 13" ><g opacity="1"><path d="M.3 7C3 1.500 11.500 1 14.700 6.300 11.500 11.300 4 12 .3 7z" fill="#fff" stroke="#111" stroke-width="1.300"/><path d="M.3 6.800C3 1.300 11.500 .8 14.700 6.100 11.500 2.800 4 3.200 .3 6.800z" fill="#111" stroke="#111" stroke-width="1.200" stroke-linejoin="round"/><circle cx="7.700" cy="6.500" r="3.400" fill="#111"/><circle cx="6.400" cy="5.200" r="1.100" fill="#fff"/></g></svg>
<svg class="a" style="left:654px;top:246px" width="11" height="15" viewBox="0 0 11 15" ><path d="M2 7V4.300a2.700 2.700 0 0 1 5.400 0V7" fill="none" stroke="#a8a8a8" stroke-width="1.400"/><rect x="0" y="6.500" width="9.500" height="7.500" fill="#a8a8a8"/></svg>
<div class="t" style="left:672px;top:245px;line-height:17px;height:17px;font-size:13.200px;">hb-tratt</div>
<svg class="a" style="left:634px;top:264px" width="16" height="13" viewBox="0 0 15 13" ><g opacity="1"><path d="M.3 7C3 1.500 11.500 1 14.700 6.300 11.500 11.300 4 12 .3 7z" fill="#fff" stroke="#111" stroke-width="1.300"/><path d="M.3 6.800C3 1.300 11.500 .8 14.700 6.100 11.500 2.800 4 3.200 .3 6.800z" fill="#111" stroke="#111" stroke-width="1.200" stroke-linejoin="round"/><circle cx="7.700" cy="6.500" r="3.400" fill="#111"/><circle cx="6.400" cy="5.200" r="1.100" fill="#fff"/></g></svg>
<svg class="a" style="left:654px;top:263px" width="11" height="15" viewBox="0 0 11 15" ><path d="M2 7V4.300a2.700 2.700 0 0 1 5.400 0V7" fill="none" stroke="#a8a8a8" stroke-width="1.400"/><rect x="0" y="6.500" width="9.500" height="7.500" fill="#a8a8a8"/></svg>
<div class="t" style="left:672px;top:262px;line-height:17px;height:17px;font-size:13.200px;">quote</div>
<div class="gd" style="left:745px;top:625px"></div><div class="gd" style="left:748px;top:625px"></div><div class="gd" style="left:751px;top:625px"></div><div class="gd" style="left:754px;top:625px"></div><div class="gd" style="left:757px;top:625px"></div><div class="gd" style="left:760px;top:625px"></div>
<div class="t" style="left:634px;top:630.5px;font-size:12.700px">Property Editor</div>
<svg class="a" style="left:848px;top:633px" width="11" height="11" viewBox="0 0 11 11" ><rect x=".5" y=".5" width="10" height="10" rx="2" fill="none" stroke="#555"/><rect x="4.500" y="2.500" width="4" height="4" fill="#f0eeea" stroke="#444" stroke-width=".9"/><rect x="2.500" y="4.500" width="4" height="4" fill="#f0eeea" stroke="#444" stroke-width=".9"/></svg><svg class="a" style="left:862px;top:633px" width="11" height="11" viewBox="0 0 11 11" ><rect x=".5" y=".5" width="10" height="10" rx="2" fill="none" stroke="#555"/><path d="M3 3l5 5M8 3l-5 5" stroke="#222" stroke-width="1.800"/></svg>
<div class="a" style="left:630px;top:648px;width:245px;height:322px;border:1px solid #c0bdb8"></div>
<div class="t" style="left:640.5px;top:662.5px;font-size:12.500px">Selection:</div>
<div class="combo" style="left:701px;top:658px;width:164px;height:25px"><div class="t" style="left:4px;top:4px;font-size:12.500px">No Selection</div><svg class="a" style="left:148px;top:10px" width="9" height="6"><path d="M0 0h8l-4 5z" fill="#444"/></svg></div>
<div class="t dis" style="left:640.5px;top:690.5px;font-size:12.500px">General Properties</div>
<div class="a" style="left:641px;top:710px;width:224px;height:203px;border:1px solid #d6d3ce;border-radius:2px;background:#eeebe7"></div>
<div class="t dis" style="left:635.5px;width:100px;text-align:right;top:722.7px;font-size:12.500px">Layer:</div>
<div class="field" style="left:742px;top:718.7px;width:111px;height:24px;background:linear-gradient(#f6f5f3,#eceae7);border-color:#cfccc7"><svg class="a" style="left:95px;top:9px" width="9" height="6"><path d="M0 0h8l-4 5z" fill="#dad7d2"/></svg></div>
<div class="t dis" style="left:635.5px;width:100px;text-align:right;top:749.7px;font-size:12.500px">Color:</div>
<div class="field" style="left:742px;top:745.7px;width:111px;height:24px;background:linear-gradient(#f6f5f3,#eceae7);border-color:#cfccc7"><svg class="a" style="left:95px;top:9px" width="9" height="6"><path d="M0 0h8l-4 5z" fill="#dad7d2"/></svg><div class="a" style="left:5px;top:5px;width:16px;height:11px;border:1px solid #555;background:#fff"></div><div class="t dis" style="left:25px;top:3px">By Layer</div></div>
<div class="t dis" style="left:635.5px;width:100px;text-align:right;top:776.7px;font-size:12.500px">Lineweight:</div>
<div class="field" style="left:742px;top:772.7px;width:111px;height:24px;background:linear-gradient(#f6f5f3,#eceae7);border-color:#cfccc7"><svg class="a" style="left:95px;top:9px" width="9" height="6"><path d="M0 0h8l-4 5z" fill="#dad7d2"/></svg><div class="a" style="left:5px;top:11px;width:16px;height:1px;background:#666"></div><div class="t dis" style="left:25px;top:3px">By Layer</div></div>
<div class="t dis" style="left:635.5px;width:100px;text-align:right;top:803.7px;font-size:12.500px">Linetype:</div>
<div class="field" style="left:742px;top:799.7px;width:111px;height:24px;background:linear-gradient(#f6f5f3,#eceae7);border-color:#cfccc7"><svg class="a" style="left:95px;top:9px" width="9" height="6"><path d="M0 0h8l-4 5z" fill="#dad7d2"/></svg><div class="t dis" style="left:4px;top:3px">By Layer</div></div>
<div class="t dis" style="left:635.5px;width:100px;text-align:right;top:830.7px;font-size:12.500px">Linetype Scale:</div>
<div class="field" style="left:742px;top:826.7px;width:111px;height:24px;background:#efedea;border-color:#bdbab5"></div>
<div class="t dis" style="left:635.5px;width:100px;text-align:right;top:857.7px;font-size:12.500px">Draw Order:</div>
<div class="field" style="left:742px;top:853.7px;width:111px;height:24px;background:#efedea;border-color:#bdbab5"></div>
<div class="t dis" style="left:635.5px;width:100px;text-align:right;top:884.7px;font-size:12.500px">Handle:</div>
<div class="field" style="left:742px;top:880.7px;width:111px;height:24px;background:#efedea;border-color:#bdbab5"></div>
<div class="a" style="left:876px;top:134px;width:36px;height:836px;background:linear-gradient(90deg,#f8f6f3,#efece8);border-left:1px solid #d6d3ce"></div>
<div class="gd" style="left:887px;top:139px"></div><div class="gd" style="left:887px;top:142px"></div><div class="gd" style="left:890px;top:139px"></div><div class="gd" style="left:890px;top:142px"></div><div class="gd" style="left:893px;top:139px"></div><div class="gd" style="left:893px;top:142px"></div><div class="gd" style="left:896px;top:139px"></div><div class="gd" style="left:896px;top:142px"></div><div class="gd" style="left:899px;top:139px"></div><div class="gd" style="left:899px;top:142px"></div><div class="gd" style="left:902px;top:139px"></div><div class="gd" style="left:902px;top:142px"></div>
<div class="a" style="left:879px;top:147px;width:29px;height:29px;border:1px solid #858585;background:linear-gradient(90deg,rgba(0,0,0,.18),rgba(0,0,0,0) 18%,rgba(0,0,0,0) 82%,rgba(0,0,0,.18)),linear-gradient(#8a8a8a,#b9b9b9 35%,#ececec)"></div><svg class="a" style="left:882px;top:150.5px" width="22" height="22" viewBox="0 0 22 22" ><rect x=".5" y=".5" width="21" height="21" fill="#fff" stroke="#b5b5b5"/><rect x="1" y="1" width="20" height="3.300" fill="#000"/><rect x="1.500" y="1.500" width="2.300" height="2.300" fill="#fff"/><g transform="translate(.5 .5)"><path d="M6 9l6-2v9l-6 2z" fill="#999" stroke="#666" stroke-width=".6"/><path d="M9 8l6-2v9l-6 2z" fill="#f6b0b0" stroke="#c66" stroke-width=".6"/></g></svg>
<svg class="a" style="left:882px;top:180.5px" width="22" height="22" viewBox="0 0 22 22" ><rect x=".5" y=".5" width="21" height="21" fill="#fff" stroke="#b5b5b5"/><rect x="1" y="1" width="20" height="3.300" fill="#000"/><rect x="1.500" y="1.500" width="2.300" height="2.300" fill="#fff"/><g transform="translate(.5 .5)"><rect x="6" y="7.500" width="7" height="6" fill="#f3e9a8" stroke="#998"/><circle cx="13" cy="13" r="3" fill="#f3e9a8" stroke="#998"/></g></svg>
<div class="a" style="left:885px;top:210px;width:17px;height:1px;background:#d0cdc8"></div>
<div class="a" style="left:879px;top:214px;width:29px;height:29px;border:1px solid #858585;background:linear-gradient(90deg,rgba(0,0,0,.18),rgba(0,0,0,0) 18%,rgba(0,0,0,0) 82%,rgba(0,0,0,.18)),linear-gradient(#8a8a8a,#b9b9b9 35%,#ececec)"></div><svg class="a" style="left:882px;top:217.5px" width="22" height="22" viewBox="0 0 22 22" ><rect x=".5" y=".5" width="21" height="21" fill="#fff" stroke="#b5b5b5"/><rect x="1" y="1" width="20" height="3.300" fill="#000"/><rect x="1.500" y="1.500" width="2.300" height="2.300" fill="#fff"/><g transform="translate(.5 .5)"><rect x="3" y="6" width="3" height="2.500" fill="#111"/><rect x="3" y="10.500" width="3" height="2.500" fill="#111"/><rect x="3" y="15" width="3" height="2.500" fill="#111"/><rect x="8.500" y="5.500" width="9" height="3" fill="#e8e8e8" stroke="#999" stroke-width=".7"/><rect x="8.500" y="10" width="9" height="3" fill="#fff" stroke="#999" stroke-width=".7"/><rect x="8.500" y="14.500" width="9" height="3" fill="#e8e8e8" stroke="#999" stroke-width=".7"/></g></svg>
<div class="a" style="left:885px;top:247px;width:17px;height:1px;background:#d0cdc8"></div>
<div class="a" style="left:879px;top:251px;width:29px;height:29px;border:1px solid #858585;background:linear-gradient(90deg,rgba(0,0,0,.18),rgba(0,0,0,0) 18%,rgba(0,0,0,0) 82%,rgba(0,0,0,.18)),linear-gradient(#8a8a8a,#b9b9b9 35%,#ececec)"></div><svg class="a" style="left:882px;top:254.5px" width="22" height="22" viewBox="0 0 22 22" ><rect x=".5" y=".5" width="21" height="21" fill="#fff" stroke="#b5b5b5"/><rect x="1" y="1" width="20" height="3.300" fill="#000"/><rect x="1.500" y="1.500" width="2.300" height="2.300" fill="#fff"/><g transform="translate(.5 .5)"><path d="M3 7h9M3 9.500h10M3 12h12M3 14.500h11" stroke="#99a" stroke-width=".9"/><rect x="2" y="17" width="17" height="2.500" fill="#ddd" stroke="#888" stroke-width=".6"/></g></svg>
<div class="a" style="left:0;top:970px;width:913px;height:46px;background:#f0eeea"></div>
<div class="t" style="left:2px;top:977px;font-size:12.300px">220,150</div>
<div class="t" style="left:2px;top:996px;font-size:12.150px">@162.1711,25.6525</div>
<div class="a" style="left:151.5px;top:974px;width:1px;height:40px;background:#b3b0ab"></div>
<div class="t" style="left:155px;top:977px;font-size:12.300px">266.2705&lt;34°</div>
<div class="t" style="left:155px;top:996px;font-size:12.300px">@164.1875&lt;9°</div>
<div class="a" style="left:303px;top:986px;width:1px;height:18px;background-image:linear-gradient(#b9b6b1 50%,transparent 50%);background-size:1px 2px"></div>
<div class="a" style="left:563px;top:986px;width:1px;height:18px;background-image:linear-gradient(#b9b6b1 50%,transparent 50%);background-size:1px 2px"></div>
<div class="a" style="left:759px;top:986px;width:1px;height:18px;background-image:linear-gradient(#b9b6b1 50%,transparent 50%);background-size:1px 2px"></div>
<div class="t" style="left:321.5px;top:986.5px;font-size:12.600px">Specify position</div>
<svg class="a" style="left:424px;top:977px" width="19" height="33" viewBox="0 0 19 33" ><rect x=".7" y="1.100" width="17.200" height="29.700" rx="8.600" fill="#fff" stroke="#555" stroke-width="1"/><path d="M.7 14.900Q9.300 12.400 17.900 14.900" stroke="#444" stroke-width="1.500" fill="none"/><path d="M9.300 1.100v2M9.300 10.700v2.800" stroke="#444" stroke-width="1.200"/><rect x="7.800" y="3" width="3" height="7.700" rx="1.500" fill="#fff" stroke="#444" stroke-width="1"/></svg>
<div class="t" style="left:457px;top:986.5px;font-size:12.600px">Cancel</div>
<div class="t" style="left:567px;top:986.5px;font-size:12.600px">No entities selected.</div>
<svg class="a" style="left:900px;top:1003px" width="12" height="12" viewBox="0 0 12 12" ><g fill="#b9b6b1"><rect x="9" y="1" width="1.500" height="1.500"/><rect x="6" y="4" width="1.500" height="1.500"/><rect x="9" y="4" width="1.500" height="1.500"/><rect x="3" y="7" width="1.500" height="1.500"/><rect x="6" y="7" width="1.500" height="1.500"/><rect x="9" y="7" width="1.500" height="1.500"/><rect x="0" y="10" width="1.500" height="1.500"/><rect x="3" y="10" width="1.500" height="1.500"/><rect x="6" y="10" width="1.500" height="1.500"/><rect x="9" y="10" width="1.500" height="1.500"/></g></svg>
</div>
</body></html>
